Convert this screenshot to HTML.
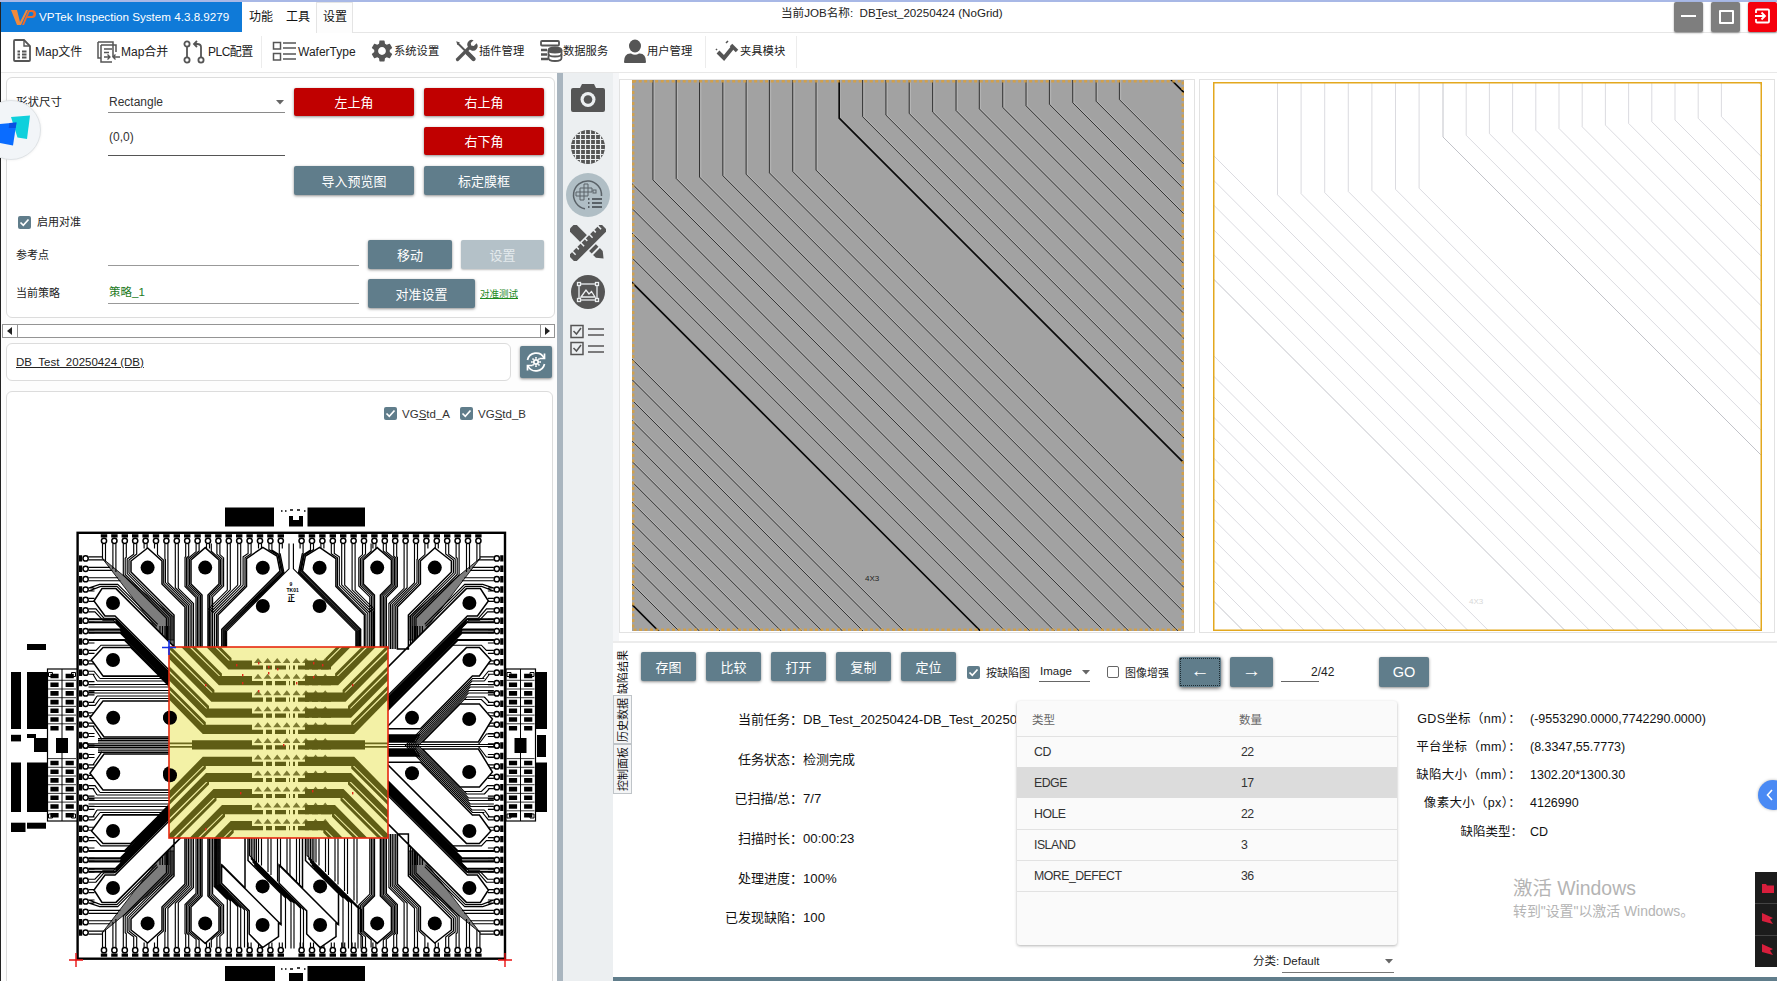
<!DOCTYPE html>
<html lang="zh-CN">
<head>
<meta charset="utf-8">
<title>VPTek Inspection System</title>
<style>
html,body{margin:0;padding:0;}
body{width:1777px;height:981px;overflow:hidden;background:#fff;position:relative;font-family:"Liberation Sans","Noto Sans CJK SC",sans-serif;font-size:12px;color:#222;}
.a{position:absolute;}
.t{position:absolute;white-space:nowrap;line-height:1;}
.btn{position:absolute;background:#607d8b;color:#fff;border-radius:2px;box-shadow:0 1px 3px rgba(0,0,0,.45);text-align:center;font-size:13px;box-sizing:border-box;}
.btn.red{background:#c00000;}
.btn span{position:absolute;left:0;right:0;top:50%;transform:translateY(-50%);line-height:1;}
.card{position:absolute;border:1px solid #dcdcdc;border-radius:6px;background:#fff;box-sizing:border-box;}
.ul{position:absolute;height:1px;background:#8a8a8a;}
.cb{position:absolute;width:13px;height:13px;background:#607d8b;border-radius:2px;}
.cb svg{position:absolute;left:0;top:0;}
.row{position:absolute;left:0;right:0;border-bottom:1px solid #e2e2e2;}
</style>
</head>
<body>
<!-- top strip -->
<div class="a" style="left:0;top:0;width:1777px;height:2px;background:#a8b8e6;"></div>
<div class="a" style="left:0;top:2px;width:1px;height:979px;background:#222;"></div>
<!-- title -->
<div class="a" style="left:1px;top:2px;width:241px;height:30px;background:#0f7ad8;"></div>
<svg class="a" style="left:9px;top:7px" width="28" height="20" viewBox="0 0 28 20">
<path d="M2 3 L8 3 L11 15 L17 3 L19 3 L12 18 L8 18 Z" fill="#f08a3c"/>
<path d="M13 18 L18.5 5 Q19 3 21 3 L23 3 Q27 3 27 7 Q27 11 23 11 L18 11 L19 9 L22.5 9 Q24.5 9 24.5 7 Q24.5 5 22.5 5 L20.5 5 L15 18 Z" fill="#ef6a2a"/>
</svg>
<div class="t" style="left:39px;top:11px;font-size:11.65px;color:#fff;">VPTek Inspection System 4.3.8.9279</div>
<div class="t" style="left:249px;top:11px;font-size:12px;color:#111;">功能</div>
<div class="t" style="left:286px;top:11px;font-size:12px;color:#111;">工具</div>
<div class="a" style="left:316px;top:2px;width:37px;height:31px;border:1px solid #e4e4e4;border-bottom:none;background:#fdfdfd;box-sizing:border-box;"></div>
<div class="t" style="left:323px;top:11px;font-size:12px;color:#111;">设置</div>
<div class="a" style="left:353px;top:32px;width:1424px;height:1px;background:#e6e6e6;"></div>
<div class="t" style="left:781px;top:7px;font-size:11.6px;color:#222;">当前JOB名称:&nbsp; DB<u>T</u>est_20250424 (NoGrid)</div>
<!-- window buttons -->
<div class="a" style="left:1674px;top:2px;width:29px;height:30px;background:#7e7e7e;border-radius:2px;box-shadow:0 1px 2px rgba(0,0,0,.4);"><div class="a" style="left:7px;top:13px;width:15px;height:2px;background:#fff;"></div></div>
<div class="a" style="left:1711px;top:2px;width:29px;height:30px;background:#7e7e7e;border-radius:2px;box-shadow:0 1px 2px rgba(0,0,0,.4);"><div class="a" style="left:8px;top:8px;width:11px;height:10px;border:2px solid #fff;border-radius:1px;"></div></div>
<div class="a" style="left:1748px;top:2px;width:29px;height:30px;background:#f5000c;border-radius:2px;box-shadow:0 1px 2px rgba(0,0,0,.4);">
<svg width="29" height="29" viewBox="0 0 29 29" fill="none" stroke="#fff" stroke-width="1.8"><path d="M8 11V8.5Q8 7.5 9 7.5H20Q21 7.5 21 8.5V19.500000000000004Q21 20.5 20 20.5H9Q8 20.5 8 19.5V17"/><path d="M7 14H17M13.5 10.5L17 14L13.5 17.5"/></svg></div>
<div class="a" style="left:1px;top:72px;width:1776px;height:1px;background:#e8e8e8;"></div>
<div class="a" style="left:261px;top:36px;width:1px;height:32px;background:#ececec;"></div>
<div class="a" style="left:705px;top:36px;width:1px;height:32px;background:#ececec;"></div>
<div class="a" style="left:796px;top:36px;width:1px;height:32px;background:#ececec;"></div>
<!-- Map file icon -->
<svg class="a" style="left:11px;top:38px" width="22" height="26" viewBox="0 0 22 26" fill="none" stroke="#555" stroke-width="1.8"><path d="M3 3Q3 2 4 2H13L19 8V22Q19 23 18 23H4Q3 23 3 22Z"/><path d="M13 2V8H19" stroke-width="1.4"/><path d="M6.5 13.5H9M11 13.5H15.500000000000002M6.5 16.5H9M11 16.5H15.5M6.5 19.5H9M11 19.5H15.5" stroke-width="2"/></svg>
<div class="t" style="left:35px;top:46px;">Map文件</div>
<!-- Map merge icon -->
<svg class="a" style="left:96px;top:39px" width="26" height="26" viewBox="0 0 26 26" fill="none" stroke="#555" stroke-width="1.5"><path d="M2 3H17V18M2 3V19H5"/><path d="M5 6H20V13M5 6V23H16"/><path d="M8 10H16M8 13.500000000000002H13M8 18H14M11.5 15.5L14 18L11.5 20.5M24 18H17M19.5 15.5L17 18L19.5 20.5" stroke-width="1.3"/></svg>
<div class="t" style="left:121px;top:46px;">Map合并</div>
<!-- PLC icon -->
<svg class="a" style="left:182px;top:39px" width="24" height="26" viewBox="0 0 24 26" fill="none" stroke="#555" stroke-width="1.8"><circle cx="5" cy="5" r="2.6"/><circle cx="5" cy="21" r="2.6"/><circle cx="19" cy="21" r="2.6"/><path d="M5 7.8V18.2M19 18.2V8Q19 5 15 5H12M15 2L12 5L15 8"/></svg>
<div class="t" style="left:208px;top:46px;letter-spacing:-.5px;">PLC配置</div>
<!-- WaferType icon -->
<svg class="a" style="left:272px;top:41px" width="26" height="22" viewBox="0 0 26 22" fill="none" stroke="#555" stroke-width="1.5"><rect x="1.5" y="1.5" width="7" height="6.5"/><rect x="1.5" y="12.5" width="7" height="6.5"/><path d="M11 2H24M11 7H24M11 13H24M11 18H24" stroke-width="1.3"/></svg>
<div class="t" style="left:298px;top:46px;">WaferType</div>
<!-- gear -->
<svg class="a" style="left:369px;top:38px" width="26" height="26" viewBox="0 0 24 24"><path fill="#555" d="M19.14 12.94c.04-.3.06-.61.06-.94 0-.32-.02-.64-.07-.94l2.030000000000001-1.58a.49.49 0 0 0 .12-.61l-1.92-3.32a.488.488 0 0 0-.59-.22l-2.39.96c-.5-.38-1.03-.7-1.62-.94l-.36-2.54a.484.484 0 0 0-.48-.41h-3.840000000000001c-.24 0-.43.17-.47.41l-.36 2.54c-.59.24-1.13.57-1.62.94l-2.39-.96c-.22-.08-.47 0-.59.22L2.74 8.870000000000001c-.12.21-.08.47.12.61l2.03 1.58c-.05.3-.09.63-.09.94s.02.64.07.94l-2.03 1.58a.49.49 0 0 0-.12.61l1.92 3.32c.12.22.37.29.59.22l2.39-.96c.5.38 1.030000000000001.7 1.62.94l.36 2.54c.05.24.24.41.48.41h3.84c.24 0 .44-.17.47-.41l.36-2.54c.59-.24 1.13-.56 1.620000000000001-.94l2.39.96c.22.08.47 0 .59-.22l1.92-3.320000000000001c.12-.22.07-.47-.12-.61l-2.01-1.58zM12 15.6c-1.98 0-3.600000000000001-1.62-3.6-3.6s1.62-3.6 3.600000000000001-3.6 3.6 1.62 3.6 3.6-1.62 3.6-3.6 3.6z"/></svg>
<div class="t" style="left:394px;top:46px;font-size:11.3px;">系统设置</div>
<!-- tools -->
<svg class="a" style="left:454px;top:39px" width="24" height="24" viewBox="0 0 24 24"><g fill="none" stroke="#555" stroke-linecap="round"><path d="M3.5 20.5L14.5 9.5" stroke-width="3.2"/><path d="M4 4.500000000000001L12 12.5" stroke-width="2"/><path d="M13.5 14L19.5 20" stroke-width="4.4"/></g><path d="M22.6 4.2L19.8 7L17.2 6.6L16.8 4L19.600000000000005 1.2A4.6 4.6 0 0 0 13.6 7.200000000000001L15 10L17 11.2A4.6 4.6 0 0 0 22.6 4.2Z" fill="#555"/><path d="M2.2 2.2L6 3.4L4.5 4.5L3.4 6Z" fill="#555"/></svg>
<div class="t" style="left:479px;top:46px;font-size:11.3px;">插件管理</div>
<!-- data -->
<svg class="a" style="left:539px;top:39px" width="26" height="24" viewBox="0 0 26 24" fill="none" stroke="#555" stroke-width="1.8"><rect x="2" y="2" width="18" height="4.5" rx="1"/><path d="M2 11H8M2 15.5H8M2 20H9" stroke-width="2.4"/><ellipse cx="16" cy="11" rx="6.5" ry="2.6" fill="#555"/><path d="M9.5 11V19Q9.5 22 16 22Q22.5 22 22.5 19V11" /><path d="M9.5 15Q9.5 17.5 16 17.5Q22.5 17.5 22.5 15"/></svg>
<div class="t" style="left:563px;top:46px;font-size:11.3px;">数据服务</div>
<!-- user -->
<svg class="a" style="left:623px;top:38px" width="24" height="26" viewBox="0 0 24 26"><ellipse cx="12" cy="8" rx="6" ry="6.5" fill="#555"/><path d="M1 24Q1 15 8 15.500000000000002Q12 18 16 15.5Q23 15 23 24Q23 25 22 25H2Q1 25 1 24Z" fill="#555"/></svg>
<div class="t" style="left:647px;top:46px;font-size:11.3px;">用户管理</div>
<!-- fixture -->
<svg class="a" style="left:714px;top:39px" width="26" height="24" viewBox="0 0 26 24" fill="none" stroke="#555"><path d="M4 13L10 19L19 8" stroke-width="4"/><path d="M17 6L23 12" stroke-width="3.5"/><path d="M12 4L14 2M3 10L2 11" stroke-width="1.6"/></svg>
<div class="t" style="left:740px;top:46px;font-size:11.3px;">夹具模块</div>

<!-- left panel bg -->
<div class="a" style="left:1px;top:73px;width:556px;height:908px;background:#fdfdfd;"></div>
<div class="card" style="left:6px;top:77px;width:549px;height:241px;"></div>
<div class="t" style="left:16px;top:97px;font-size:11.5px;">形状尺寸</div>
<div class="t" style="left:109px;top:96px;font-size:12px;color:#333;">Rectangle</div>
<svg class="a" style="left:276px;top:100px" width="8" height="5"><path d="M0 0H8L4 4.5Z" fill="#666"/></svg>
<div class="ul" style="left:108px;top:112px;width:177px;"></div>
<div class="t" style="left:109px;top:131px;font-size:12px;color:#333;">(0,0)</div>
<div class="ul" style="left:108px;top:155px;width:177px;background:#555;"></div>
<!-- floating circle -->
<div class="a" style="left:-19px;top:100px;width:60px;height:60px;border-radius:50%;background:#f2f5f8;border:1px solid #dfe3e6;box-sizing:border-box;box-shadow:0 0 3px rgba(0,0,0,.08);"></div>
<svg class="a" style="left:0;top:112px" width="34" height="36" viewBox="0 0 34 36"><path d="M11 5L30 3.5L27 27L17.500000000000004 25.5Z" fill="#0fd0dc"/><path d="M0 12L16.5 10.500000000000002L13 33.5L0 31Z" fill="#0a6cff"/><path d="M9.5 11.1L16.5 10.5L15.7 16L8.700000000000001 16Z" fill="#0a50e0"/></svg>
<div class="btn red" style="left:294px;top:88px;width:120px;height:28px;"><span>左上角</span></div>
<div class="btn red" style="left:424px;top:88px;width:120px;height:28px;"><span>右上角</span></div>
<div class="btn red" style="left:424px;top:127px;width:120px;height:28px;"><span>右下角</span></div>
<div class="btn" style="left:294px;top:166px;width:120px;height:29px;"><span>导入预览图</span></div>
<div class="btn" style="left:424px;top:166px;width:120px;height:29px;"><span>标定膜框</span></div>
<div class="cb" style="left:18px;top:216px;"><svg width="13" height="13" viewBox="0 0 13 13" fill="none" stroke="#fff" stroke-width="1.7"><path d="M2.5 6.5L5.3 9.3L10.5 3.5"/></svg></div>
<div class="t" style="left:37px;top:217px;font-size:11px;">启用对准</div>
<div class="t" style="left:16px;top:250px;font-size:11px;">参考点</div>
<div class="ul" style="left:108px;top:265px;width:251px;background:#999;"></div>
<div class="btn" style="left:368px;top:240px;width:84px;height:29px;"><span>移动</span></div>
<div class="btn" style="left:461px;top:240px;width:83px;height:29px;background:#b4c1c8;box-shadow:0 1px 2px rgba(0,0,0,.25);"><span style="color:#e4eaed">设置</span></div>
<div class="t" style="left:16px;top:288px;font-size:11px;">当前策略</div>
<div class="t" style="left:109px;top:287px;font-size:11.5px;color:#1c7a1c;">策略_1</div>
<div class="ul" style="left:108px;top:303px;width:251px;background:#999;"></div>
<div class="btn" style="left:368px;top:279px;width:107px;height:29px;"><span>对准设置</span></div>
<div class="t" style="left:480px;top:289px;font-size:9.500000000000002px;color:#1c8a1c;text-decoration:underline;">对准测试</div>
<!-- hscroll -->
<div class="a" style="left:2px;top:324px;width:553px;height:14px;background:#fff;border:1px solid #949494;box-sizing:border-box;"></div>
<div class="a" style="left:17px;top:324px;width:1px;height:14px;background:#949494;"></div>
<div class="a" style="left:540px;top:324px;width:1px;height:14px;background:#949494;"></div>
<svg class="a" style="left:7px;top:327px" width="6" height="8"><path d="M5 0V8L0 4Z" fill="#222"/></svg>
<svg class="a" style="left:545px;top:327px" width="6" height="8"><path d="M0 0V8L5 4Z" fill="#222"/></svg>
<!-- db card -->
<div class="card" style="left:6px;top:343px;width:505px;height:38px;"></div>
<div class="t" style="left:16px;top:357px;font-size:11.5px;text-decoration:underline;color:#222;">DB_Test_20250424 (DB)</div>
<div class="btn" style="left:520px;top:346px;width:32px;height:32px;">
<svg class="a" style="left:4px;top:4px" width="24" height="24" viewBox="0 0 24 24" fill="none" stroke="#fff" stroke-width="1.7"><path d="M3.5 10A8.8 8.8 0 0 1 20 8M20.5 14A8.8 8.8 0 0 1 4 16"/><path d="M20.5 3.5V8.5H15.5M3.5 20.5V15.500000000000002H8.5"/><circle cx="12" cy="12" r="2.2"/><path d="M12 7V8.8M12 15.2V17M7 12H8.8M15.2 12H17M8.5 8.5L9.7 9.7M14.3 14.3L15.5 15.5M8.5 15.5L9.700000000000001 14.3M14.3 9.7L15.5 8.5" stroke-width="1.6"/></svg></div>
<!-- map card -->
<div class="card" style="left:6px;top:391px;width:547px;height:600px;"></div>
<!--CHIP0--><svg class="a" style="left:7px;top:392px" width="546" height="589" viewBox="7 392 546 589"><path d="M102.0 558.0L178.0 620.5L178.0 640.0L158.0 640.0L156.0 628.0ZM102.0 933.0L178.0 870.5L178.0 851.0L158.0 851.0L156.0 863.0ZM480.4 558.0L404.4 620.5L404.4 640.0L424.4 640.0L426.4 628.0ZM480.4 933.0L404.4 870.5L404.4 851.0L424.4 851.0L426.4 863.0Z" fill="#7d7d7d" stroke="#222" stroke-width="1"/>
<g fill="none" stroke="#000">
<path d="M102.5 543.5L102.5 548.5M105.5 543.5L105.5 548.5M112.9 543.5L112.9 548.5M115.9 543.5L115.9 548.5M123.3 543.5L123.3 548.5M126.3 543.5L126.3 548.5M133.7 543.5L133.7 548.5M136.7 543.5L136.7 548.5M144.1 543.5L144.1 548.5M147.1 543.5L147.1 548.5M154.5 543.5L154.5 548.5M157.5 543.5L157.5 548.5M164.9 543.5L164.9 548.5M167.9 543.5L167.9 548.5M175.3 543.5L175.3 548.5M178.3 543.5L178.3 548.5M185.7 543.5L185.7 548.5M188.7 543.5L188.7 548.5M196.1 543.5L196.1 548.5M199.1 543.5L199.1 548.5M206.5 543.5L206.5 548.5M209.5 543.5L209.5 548.5M216.9 543.5L216.9 548.5M219.9 543.5L219.9 548.5M227.3 543.5L227.3 548.5M230.3 543.5L230.3 548.5M237.7 543.5L237.7 548.5M240.7 543.5L240.7 548.5M248.1 543.5L248.1 548.5M251.1 543.5L251.1 548.5M258.5 543.5L258.5 548.5M261.5 543.5L261.5 548.5M268.9 543.5L268.9 548.5M271.9 543.5L271.9 548.5M279.3 543.5L279.3 548.5M282.3 543.5L282.3 548.5M136.7 543.5L136.7 554.0L129.0 560.0L129.0 572.8L172.0 615.8L172.0 649.0M133.7 543.5L133.7 554.1L127.2 559.1L127.2 573.6L170.2 616.6L170.2 649.0M126.3 543.5L126.3 557.3L125.2 558.2L125.2 574.4L168.2 617.4L168.2 649.0M123.3 543.5L123.3 575.0L166.4 618.1L166.4 649.0M102.5 543.5L102.5 558.5M105.5 543.5L105.5 561.5M112.9 543.5L112.9 568.9M115.9 543.5L115.9 571.9M160.0 626.0L160.0 657.0M162.5 626.0L162.5 657.0M165.0 626.0L165.0 657.0M167.5 626.0L167.5 657.0M170.0 626.0L170.0 657.0M172.0 626.0L172.0 657.0M157.5 543.5L157.5 554.6L163.7 560.2L163.7 583.3L186.7 606.3L186.7 649.0M164.9 543.5L164.9 559.0L165.4 559.5L165.4 582.6L188.4 605.6L188.4 649.0M167.9 543.5L167.9 582.7L190.1 604.9L190.1 649.0M175.3 543.5L175.3 587.7L191.8 604.2L191.8 649.0M178.3 543.5L178.3 588.3L193.5 603.5L193.5 649.0M199.1 543.5L199.1 550.9L189.5 559.3L189.5 584.6L200.5 595.6L200.5 649.0M196.1 543.5L196.1 551.6L188.0 558.6L188.0 585.2L199.0 596.2L199.0 649.0M188.7 543.5L188.7 556.0L186.5 558.0L186.5 585.9L197.5 596.9L197.5 649.0M185.7 543.5L185.7 556.7L185.0 557.3L185.0 586.5L196.0 597.5L196.0 649.0M211.3 543.5L211.3 551.2L220.4 559.4L220.4 584.6L209.4 595.6L209.4 649.0M216.9 543.5L216.9 554.1L222.0 558.7L222.0 585.2L211.0 596.2L211.0 649.0M219.9 543.5L219.9 554.6L223.6 557.9L223.6 585.9L212.6 596.9L212.6 649.0M251.1 543.5L251.1 553.7L245.0 557.9L245.0 585.9L216.5 614.4L216.5 649.0M248.1 543.5L248.1 553.4L243.1 556.9L243.1 585.1L214.6 613.6L214.6 649.0M240.7 543.5L240.7 584.8L212.7 612.8L212.7 649.0M237.7 543.5L237.7 585.1L210.8 612.0L210.8 649.0M230.3 543.5L230.3 589.8L208.9 611.2L208.9 649.0M227.3 543.5L227.3 590.1L207.0 610.4L207.0 649.0M268.9 543.5L268.9 549.6L278.1 555.3L281.3 571.4L223.0 629.7L223.0 649.0M271.9 543.5L271.9 550.1L279.1 554.5L282.6 571.8L224.2 630.2L224.2 649.0M279.3 543.5L279.3 553.2L280.2 553.8L283.9 572.2L225.4 630.7L225.4 649.0M289.0 543.5L289.0 568.8L226.6 631.2L226.6 649.0M88.5 556.9L101.9 556.9M88.5 559.9L104.2 559.9M88.5 567.3L110.0 567.3M88.5 570.3L112.3 570.3M88.5 577.7L118.0 577.7M88.5 580.7L120.4 580.7M88.5 591.1L100.8 586.4L116.9 586.4L156.9 626.4M88.5 588.1L99.7 584.4L117.7 584.4L157.7 624.4M88.5 608.8L95.9 608.8L103.9 618.2L114.1 618.2L144.1 648.2M88.5 611.8L94.9 611.8L102.9 620.2L113.3 620.2L143.3 650.2M100.0 678.5L216.0 678.5M97.0 681.0L216.0 681.0M88.5 684.5L216.0 684.5M88.5 687.0L216.0 687.0M88.5 690.5L216.0 690.5M88.5 693.0L216.0 693.0M97.0 696.0L216.0 696.0M100.0 698.5L216.0 698.5M88.5 671.2L94.0 671.2L100.0 678.5M88.5 674.2L93.0 674.2L97.0 681.0M88.5 705.4L95.0 705.4L100.0 698.5M88.5 702.4L93.0 702.4L97.0 696.0M98.0 738.6L216.0 738.6M98.0 740.3L216.0 740.3M98.0 742.0L216.0 742.0M88.5 743.7L216.0 743.7M88.5 745.4L216.0 745.4M88.5 726.2L93.0 726.2L102.0 739.4M88.5 723.2L94.0 723.2M88.5 556.9L94.5 556.9M88.5 559.9L94.5 559.9M88.5 567.3L94.5 567.3M88.5 570.3L94.5 570.3M88.5 577.7L94.5 577.7M88.5 580.7L94.5 580.7M88.5 588.0L94.5 588.0M88.5 591.0L94.5 591.0M88.5 598.4L94.5 598.4M88.5 601.4L94.5 601.4M88.5 608.8L94.5 608.8M88.5 611.8L94.5 611.8M88.5 619.2L94.5 619.2M88.5 622.2L94.5 622.2M88.5 629.6L94.5 629.6M88.5 632.6L94.5 632.6M88.5 640.0L94.5 640.0M88.5 643.0L94.5 643.0M88.5 650.4L94.5 650.4M88.5 653.4L94.5 653.4M88.5 660.8L94.5 660.8M88.5 663.8L94.5 663.8M88.5 671.2L94.5 671.2M88.5 674.2L94.5 674.2M88.5 681.6L94.5 681.6M88.5 684.6L94.5 684.6M88.5 691.9L94.5 691.9M88.5 694.9L94.5 694.9M88.5 702.3L94.5 702.3M88.5 705.3L94.5 705.3M88.5 712.7L94.5 712.7M88.5 715.7L94.5 715.7M88.5 723.1L94.5 723.1M88.5 726.1L94.5 726.1M88.5 733.5L94.5 733.5M88.5 736.5L94.5 736.5M88.5 743.9L94.5 743.9M88.5 650.4L96.0 650.4L101.0 645.2L131.0 645.2M88.5 653.4L94.0 653.4M88.5 660.8L90.0 660.8M88.5 663.8L92.0 663.8M88.5 712.8L91.0 712.8M88.5 715.8L90.0 715.8M88.5 598.4L94.0 598.4M88.5 601.4L93.0 601.4M102.5 947.5L102.5 942.5M105.5 947.5L105.5 942.5M112.9 947.5L112.9 942.5M115.9 947.5L115.9 942.5M123.3 947.5L123.3 942.5M126.3 947.5L126.3 942.5M133.7 947.5L133.7 942.5M136.7 947.5L136.7 942.5M144.1 947.5L144.1 942.5M147.1 947.5L147.1 942.5M154.5 947.5L154.5 942.5M157.5 947.5L157.5 942.5M164.9 947.5L164.9 942.5M167.9 947.5L167.9 942.5M175.3 947.5L175.3 942.5M178.3 947.5L178.3 942.5M185.7 947.5L185.7 942.5M188.7 947.5L188.7 942.5M196.1 947.5L196.1 942.5M199.1 947.5L199.1 942.5M206.5 947.5L206.5 942.5M209.5 947.5L209.5 942.5M216.9 947.5L216.9 942.5M219.9 947.5L219.9 942.5M227.3 947.5L227.3 942.5M230.3 947.5L230.3 942.5M237.7 947.5L237.7 942.5M240.7 947.5L240.7 942.5M248.1 947.5L248.1 942.5M251.1 947.5L251.1 942.5M258.5 947.5L258.5 942.5M261.5 947.5L261.5 942.5M268.9 947.5L268.9 942.5M271.9 947.5L271.9 942.5M279.3 947.5L279.3 942.5M282.3 947.5L282.3 942.5M136.7 947.5L136.7 937.0L129.0 931.0L129.0 918.2L172.0 875.2L172.0 834.0M133.7 947.5L133.7 936.9L127.2 931.9L127.2 917.4L170.2 874.4L170.2 834.0M126.3 947.5L126.3 933.7L125.2 932.8L125.2 916.6L168.2 873.6L168.2 834.0M123.3 947.5L123.3 916.0L166.4 872.9L166.4 834.0M102.5 947.5L102.5 932.5M105.5 947.5L105.5 929.5M112.9 947.5L112.9 922.1M115.9 947.5L115.9 919.1M160.0 865.0L160.0 834.0M162.5 865.0L162.5 834.0M165.0 865.0L165.0 834.0M167.5 865.0L167.5 834.0M170.0 865.0L170.0 834.0M172.0 865.0L172.0 834.0M157.5 947.5L157.5 936.4L163.7 930.8L163.7 907.7L186.7 884.7L186.7 834.0M164.9 947.5L164.9 932.0L165.4 931.5L165.4 908.4L188.4 885.4L188.4 834.0M167.9 947.5L167.9 908.3L190.1 886.1L190.1 834.0M175.3 947.5L175.3 903.3L191.8 886.8L191.8 834.0M178.3 947.5L178.3 902.7L193.5 887.5L193.5 834.0M199.1 947.5L199.1 940.1L189.5 931.7L189.5 906.4L200.5 895.4L200.5 834.0M196.1 947.5L196.1 939.4L188.0 932.4L188.0 905.8L199.0 894.8L199.0 834.0M188.7 947.5L188.7 935.0L186.5 933.0L186.5 905.1L197.5 894.1L197.5 834.0M185.7 947.5L185.7 934.3L185.0 933.7L185.0 904.5L196.0 893.5L196.0 834.0M211.3 947.5L211.3 939.8L220.4 931.6L220.4 906.4L209.4 895.4L209.4 834.0M216.9 947.5L216.9 936.9L222.0 932.3L222.0 905.8L211.0 894.8L211.0 834.0M219.9 947.5L219.9 936.4L223.6 933.1L223.6 905.1L212.6 894.1L212.6 834.0M247.5 947.5L247.5 911.2L220.2 883.9L220.2 834.0M244.5 947.5L244.5 909.9L219.0 884.4L219.0 834.0M240.7 947.5L240.7 907.8L217.8 884.9L217.8 834.0M237.7 947.5L237.7 906.5L216.6 885.4L216.6 834.0M230.3 947.5L230.3 900.8L215.4 885.9L215.4 834.0M227.3 947.5L227.3 899.5L214.2 886.4L214.2 834.0M88.5 934.1L101.9 934.1M88.5 931.1L104.2 931.1M88.5 923.7L110.0 923.7M88.5 920.7L112.3 920.7M88.5 913.3L118.0 913.3M88.5 910.3L120.4 910.3M88.5 899.9L100.8 904.6L116.9 904.6L156.9 864.6M88.5 902.9L99.7 906.6L117.7 906.6L157.7 866.6M88.5 882.2L95.9 882.2L103.9 872.8L114.1 872.8L144.1 842.8M88.5 879.2L94.9 879.2L102.9 870.8L113.3 870.8L143.3 840.8M100.0 812.5L216.0 812.5M97.0 810.0L216.0 810.0M88.5 806.5L216.0 806.5M88.5 804.0L216.0 804.0M88.5 800.5L216.0 800.5M88.5 798.0L216.0 798.0M97.0 795.0L216.0 795.0M100.0 792.5L216.0 792.5M88.5 819.8L94.0 819.8L100.0 812.5M88.5 816.8L93.0 816.8L97.0 810.0M88.5 785.6L95.0 785.6L100.0 792.5M88.5 788.6L93.0 788.6L97.0 795.0M98.0 752.4L216.0 752.4M98.0 750.7L216.0 750.7M98.0 749.0L216.0 749.0M88.5 747.3L216.0 747.3M88.5 745.6L216.0 745.6M88.5 764.8L93.0 764.8L102.0 751.6M88.5 767.8L94.0 767.8M88.5 934.1L94.5 934.1M88.5 931.1L94.5 931.1M88.5 923.7L94.5 923.7M88.5 920.7L94.5 920.7M88.5 913.3L94.5 913.3M88.5 910.3L94.5 910.3M88.5 903.0L94.5 903.0M88.5 900.0L94.5 900.0M88.5 892.6L94.5 892.6M88.5 889.6L94.5 889.6M88.5 882.2L94.5 882.2M88.5 879.2L94.5 879.2M88.5 871.8L94.5 871.8M88.5 868.8L94.5 868.8M88.5 861.4L94.5 861.4M88.5 858.4L94.5 858.4M88.5 851.0L94.5 851.0M88.5 848.0L94.5 848.0M88.5 840.6L94.5 840.6M88.5 837.6L94.5 837.6M88.5 830.2L94.5 830.2M88.5 827.2L94.5 827.2M88.5 819.8L94.5 819.8M88.5 816.8L94.5 816.8M88.5 809.4L94.5 809.4M88.5 806.4L94.5 806.4M88.5 799.1L94.5 799.1M88.5 796.1L94.5 796.1M88.5 788.7L94.5 788.7M88.5 785.7L94.5 785.7M88.5 778.3L94.5 778.3M88.5 775.3L94.5 775.3M88.5 767.9L94.5 767.9M88.5 764.9L94.5 764.9M88.5 757.5L94.5 757.5M88.5 754.5L94.5 754.5M88.5 747.1L94.5 747.1M88.5 840.6L96.0 840.6L101.0 845.8L131.0 845.8M88.5 837.6L94.0 837.6M88.5 830.2L90.0 830.2M88.5 827.2L92.0 827.2M88.5 778.2L91.0 778.2M88.5 775.2L90.0 775.2M88.5 892.6L94.0 892.6M88.5 889.6L93.0 889.6M479.9 543.5L479.9 548.5M476.9 543.5L476.9 548.5M469.5 543.5L469.5 548.5M466.5 543.5L466.5 548.5M459.1 543.5L459.1 548.5M456.1 543.5L456.1 548.5M448.7 543.5L448.7 548.5M445.7 543.5L445.7 548.5M438.3 543.5L438.3 548.5M435.3 543.5L435.3 548.5M427.9 543.5L427.9 548.5M424.9 543.5L424.9 548.5M417.5 543.5L417.5 548.5M414.5 543.5L414.5 548.5M407.1 543.5L407.1 548.5M404.1 543.5L404.1 548.5M396.7 543.5L396.7 548.5M393.7 543.5L393.7 548.5M386.3 543.5L386.3 548.5M383.3 543.5L383.3 548.5M375.9 543.5L375.9 548.5M372.9 543.5L372.9 548.5M365.5 543.5L365.5 548.5M362.5 543.5L362.5 548.5M355.1 543.5L355.1 548.5M352.1 543.5L352.1 548.5M344.7 543.5L344.7 548.5M341.7 543.5L341.7 548.5M334.3 543.5L334.3 548.5M331.3 543.5L331.3 548.5M323.9 543.5L323.9 548.5M320.9 543.5L320.9 548.5M313.5 543.5L313.5 548.5M310.5 543.5L310.5 548.5M303.1 543.5L303.1 548.5M300.1 543.5L300.1 548.5M445.7 543.5L445.7 554.0L453.4 560.0L453.4 572.8L410.4 615.8L410.4 649.0M448.7 543.5L448.7 554.1L455.2 559.1L455.2 573.6L412.2 616.6L412.2 649.0M456.1 543.5L456.1 557.3L457.2 558.2L457.2 574.4L414.2 617.4L414.2 649.0M459.1 543.5L459.1 575.0L416.0 618.1L416.0 649.0M479.9 543.5L479.9 558.5M476.9 543.5L476.9 561.5M469.5 543.5L469.5 568.9M466.5 543.5L466.5 571.9M422.4 626.0L422.4 657.0M419.9 626.0L419.9 657.0M417.4 626.0L417.4 657.0M414.9 626.0L414.9 657.0M412.4 626.0L412.4 657.0M410.4 626.0L410.4 657.0M424.9 543.5L424.9 554.6L418.7 560.2L418.7 583.3L395.7 606.3L395.7 649.0M417.5 543.5L417.5 559.0L417.0 559.5L417.0 582.6L394.0 605.6L394.0 649.0M414.5 543.5L414.5 582.7L392.3 604.9L392.3 649.0M407.1 543.5L407.1 587.7L390.6 604.2L390.6 649.0M404.1 543.5L404.1 588.3L388.9 603.5L388.9 649.0M383.3 543.5L383.3 550.9L392.9 559.3L392.9 584.6L381.9 595.6L381.9 649.0M386.3 543.5L386.3 551.6L394.4 558.6L394.4 585.2L383.4 596.2L383.4 649.0M393.7 543.5L393.7 556.0L395.9 558.0L395.9 585.9L384.9 596.9L384.9 649.0M396.7 543.5L396.7 556.7L397.4 557.3L397.4 586.5L386.4 597.5L386.4 649.0M371.1 543.5L371.1 551.2L362.0 559.4L362.0 584.6L373.0 595.6L373.0 649.0M365.5 543.5L365.5 554.1L360.4 558.7L360.4 585.2L371.4 596.2L371.4 649.0M362.5 543.5L362.5 554.6L358.8 557.9L358.8 585.9L369.8 596.9L369.8 649.0M331.3 543.5L331.3 553.7L337.4 557.9L337.4 585.9L365.9 614.4L365.9 649.0M334.3 543.5L334.3 553.4L339.3 556.9L339.3 585.1L367.8 613.6L367.8 649.0M341.7 543.5L341.7 584.8L369.7 612.8L369.7 649.0M344.7 543.5L344.7 585.1L371.6 612.0L371.6 649.0M352.1 543.5L352.1 589.8L373.5 611.2L373.5 649.0M355.1 543.5L355.1 590.1L375.4 610.4L375.4 649.0M313.5 543.5L313.5 549.6L304.3 555.3L301.1 571.4L359.4 629.7L359.4 649.0M310.5 543.5L310.5 550.1L303.3 554.5L299.8 571.8L358.2 630.2L358.2 649.0M303.1 543.5L303.1 553.2L302.2 553.8L298.5 572.2L357.0 630.7L357.0 649.0M293.4 543.5L293.4 568.8L355.8 631.2L355.8 649.0M493.9 556.9L480.5 556.9M493.9 559.9L478.2 559.9M493.9 567.3L472.4 567.3M493.9 570.3L470.1 570.3M493.9 577.7L464.4 577.7M493.9 580.7L462.0 580.7M493.9 591.1L481.6 586.4L465.5 586.4L425.5 626.4M493.9 588.1L482.7 584.4L464.7 584.4L424.7 624.4M493.9 608.8L486.5 608.8L478.5 618.2L468.3 618.2L438.3 648.2M493.9 611.8L487.5 611.8L479.5 620.2L469.1 620.2L439.1 650.2M484.4 678.5L472.4 678.5L405.1 745.8M484.4 681.0L472.0 681.0L407.2 745.8M493.9 684.5L470.6 684.5L409.3 745.8M493.9 687.0L470.2 687.0L411.4 745.8M493.9 690.5L468.8 690.5L413.5 745.8M493.9 693.0L468.4 693.0L415.6 745.8M484.4 697.0L466.6 697.0L417.8 745.8M493.9 671.2L488.4 671.2L482.4 678.5M493.9 674.2L489.4 674.2L484.4 681.0M493.9 705.4L487.4 705.4L481.4 699.5L464.4 699.5M493.9 702.4L489.4 702.4L484.4 697.0M493.9 744.5L366.4 744.5M493.9 734.0L486.4 734.0L478.4 744.5M493.9 556.9L487.9 556.9M493.9 559.9L487.9 559.9M493.9 567.3L487.9 567.3M493.9 570.3L487.9 570.3M493.9 577.7L487.9 577.7M493.9 580.7L487.9 580.7M493.9 588.0L487.9 588.0M493.9 591.0L487.9 591.0M493.9 598.4L487.9 598.4M493.9 601.4L487.9 601.4M493.9 608.8L487.9 608.8M493.9 611.8L487.9 611.8M493.9 619.2L487.9 619.2M493.9 622.2L487.9 622.2M493.9 629.6L487.9 629.6M493.9 632.6L487.9 632.6M493.9 640.0L487.9 640.0M493.9 643.0L487.9 643.0M493.9 650.4L487.9 650.4M493.9 653.4L487.9 653.4M493.9 660.8L487.9 660.8M493.9 663.8L487.9 663.8M493.9 671.2L487.9 671.2M493.9 674.2L487.9 674.2M493.9 681.6L487.9 681.6M493.9 684.6L487.9 684.6M493.9 691.9L487.9 691.9M493.9 694.9L487.9 694.9M493.9 702.3L487.9 702.3M493.9 705.3L487.9 705.3M493.9 712.7L487.9 712.7M493.9 715.7L487.9 715.7M493.9 723.1L487.9 723.1M493.9 726.1L487.9 726.1M493.9 733.5L487.9 733.5M493.9 736.5L487.9 736.5M493.9 743.9L487.9 743.9M493.9 650.4L486.4 650.4L481.4 645.2L451.4 645.2M493.9 653.4L488.4 653.4M493.9 660.8L492.4 660.8M493.9 663.8L490.4 663.8M493.9 712.8L491.4 712.8M493.9 715.8L492.4 715.8M493.9 598.4L488.4 598.4M493.9 601.4L489.4 601.4M479.9 947.5L479.9 942.5M476.9 947.5L476.9 942.5M469.5 947.5L469.5 942.5M466.5 947.5L466.5 942.5M459.1 947.5L459.1 942.5M456.1 947.5L456.1 942.5M448.7 947.5L448.7 942.5M445.7 947.5L445.7 942.5M438.3 947.5L438.3 942.5M435.3 947.5L435.3 942.5M427.9 947.5L427.9 942.5M424.9 947.5L424.9 942.5M417.5 947.5L417.5 942.5M414.5 947.5L414.5 942.5M407.1 947.5L407.1 942.5M404.1 947.5L404.1 942.5M396.7 947.5L396.7 942.5M393.7 947.5L393.7 942.5M386.3 947.5L386.3 942.5M383.3 947.5L383.3 942.5M375.9 947.5L375.9 942.5M372.9 947.5L372.9 942.5M365.5 947.5L365.5 942.5M362.5 947.5L362.5 942.5M355.1 947.5L355.1 942.5M352.1 947.5L352.1 942.5M344.7 947.5L344.7 942.5M341.7 947.5L341.7 942.5M334.3 947.5L334.3 942.5M331.3 947.5L331.3 942.5M323.9 947.5L323.9 942.5M320.9 947.5L320.9 942.5M313.5 947.5L313.5 942.5M310.5 947.5L310.5 942.5M303.1 947.5L303.1 942.5M300.1 947.5L300.1 942.5M445.7 947.5L445.7 937.0L453.4 931.0L453.4 918.2L410.4 875.2L410.4 834.0M448.7 947.5L448.7 936.9L455.2 931.9L455.2 917.4L412.2 874.4L412.2 834.0M456.1 947.5L456.1 933.7L457.2 932.8L457.2 916.6L414.2 873.6L414.2 834.0M459.1 947.5L459.1 916.0L416.0 872.9L416.0 834.0M479.9 947.5L479.9 932.5M476.9 947.5L476.9 929.5M469.5 947.5L469.5 922.1M466.5 947.5L466.5 919.1M422.4 865.0L422.4 834.0M419.9 865.0L419.9 834.0M417.4 865.0L417.4 834.0M414.9 865.0L414.9 834.0M412.4 865.0L412.4 834.0M410.4 865.0L410.4 834.0M424.9 947.5L424.9 936.4L418.7 930.8L418.7 907.7L395.7 884.7L395.7 834.0M417.5 947.5L417.5 932.0L417.0 931.5L417.0 908.4L394.0 885.4L394.0 834.0M414.5 947.5L414.5 908.3L392.3 886.1L392.3 834.0M407.1 947.5L407.1 903.3L390.6 886.8L390.6 834.0M404.1 947.5L404.1 902.7L388.9 887.5L388.9 834.0M383.3 947.5L383.3 940.1L392.9 931.7L392.9 906.4L381.9 895.4L381.9 834.0M386.3 947.5L386.3 939.4L394.4 932.4L394.4 905.8L383.4 894.8L383.4 834.0M393.7 947.5L393.7 935.0L395.9 933.0L395.9 905.1L384.9 894.1L384.9 834.0M396.7 947.5L396.7 934.3L397.4 933.7L397.4 904.5L386.4 893.5L386.4 834.0M371.1 947.5L371.1 939.8L362.0 931.6L362.0 906.4L373.0 895.4L373.0 834.0M365.5 947.5L365.5 936.9L360.4 932.3L360.4 905.8L371.4 894.8L371.4 834.0M362.5 947.5L362.5 936.4L358.8 933.1L358.8 905.1L369.8 894.1L369.8 834.0M493.9 934.1L480.5 934.1M493.9 931.1L478.2 931.1M493.9 923.7L472.4 923.7M493.9 920.7L470.1 920.7M493.9 913.3L464.4 913.3M493.9 910.3L462.0 910.3M493.9 899.9L481.6 904.6L465.5 904.6L425.5 864.6M493.9 902.9L482.7 906.6L464.7 906.6L424.7 866.6M493.9 882.2L486.5 882.2L478.5 872.8L468.3 872.8L438.3 842.8M493.9 879.2L487.5 879.2L479.5 870.8L469.1 870.8L439.1 840.8M484.4 812.5L472.4 812.5L405.1 745.2M484.4 810.0L472.0 810.0L407.2 745.2M493.9 806.5L470.6 806.5L409.3 745.2M493.9 804.0L470.2 804.0L411.4 745.2M493.9 800.5L468.8 800.5L413.5 745.2M493.9 798.0L468.4 798.0L415.6 745.2M484.4 794.0L466.6 794.0L417.8 745.2M493.9 819.8L488.4 819.8L482.4 812.5M493.9 816.8L489.4 816.8L484.4 810.0M493.9 785.6L487.4 785.6L481.4 791.5L464.4 791.5M493.9 788.6L489.4 788.6L484.4 794.0M493.9 746.5L366.4 746.5M493.9 757.0L486.4 757.0L478.4 746.5M493.9 934.1L487.9 934.1M493.9 931.1L487.9 931.1M493.9 923.7L487.9 923.7M493.9 920.7L487.9 920.7M493.9 913.3L487.9 913.3M493.9 910.3L487.9 910.3M493.9 903.0L487.9 903.0M493.9 900.0L487.9 900.0M493.9 892.6L487.9 892.6M493.9 889.6L487.9 889.6M493.9 882.2L487.9 882.2M493.9 879.2L487.9 879.2M493.9 871.8L487.9 871.8M493.9 868.8L487.9 868.8M493.9 861.4L487.9 861.4M493.9 858.4L487.9 858.4M493.9 851.0L487.9 851.0M493.9 848.0L487.9 848.0M493.9 840.6L487.9 840.6M493.9 837.6L487.9 837.6M493.9 830.2L487.9 830.2M493.9 827.2L487.9 827.2M493.9 819.8L487.9 819.8M493.9 816.8L487.9 816.8M493.9 809.4L487.9 809.4M493.9 806.4L487.9 806.4M493.9 799.1L487.9 799.1M493.9 796.1L487.9 796.1M493.9 788.7L487.9 788.7M493.9 785.7L487.9 785.7M493.9 778.3L487.9 778.3M493.9 775.3L487.9 775.3M493.9 767.9L487.9 767.9M493.9 764.9L487.9 764.9M493.9 757.5L487.9 757.5M493.9 754.5L487.9 754.5M493.9 747.1L487.9 747.1M493.9 840.6L486.4 840.6L481.4 845.8L451.4 845.8M493.9 837.6L488.4 837.6M493.9 830.2L492.4 830.2M493.9 827.2L490.4 827.2M493.9 778.2L491.4 778.2M493.9 775.2L492.4 775.2M493.9 892.6L488.4 892.6M493.9 889.6L489.4 889.6M303.5 948.5L303.5 909.5L249.6 855.6L249.6 836.0M300.5 948.5L300.5 908.1L251.3 858.9L251.3 836.0M294.0 948.5L294.0 903.2L253.0 862.2L253.0 836.0M291.0 948.5L291.0 901.8L254.7 865.5L254.7 836.0M285.5 948.5L285.5 897.9L256.4 868.8L256.4 836.0M258.5 836.0L258.5 862.5M261.5 836.0L261.5 865.5M268.0 836.0L268.0 872.0M271.0 836.0L271.0 875.0M277.5 836.0L277.5 881.5M280.5 836.0L280.5 884.5M287.0 836.0L287.0 891.0M290.0 836.0L290.0 894.0M296.5 836.0L296.5 900.5M299.5 836.0L299.5 903.5M361.0 948.5L361.0 909.5L307.1 855.6L307.1 836.0M358.0 948.5L358.0 908.1L308.8 858.9L308.8 836.0M351.5 948.5L351.5 903.2L310.5 862.2L310.5 836.0M348.5 948.5L348.5 901.8L312.2 865.5L312.2 836.0M343.0 948.5L343.0 897.9L313.9 868.8L313.9 836.0M316.0 836.0L316.0 862.5M319.0 836.0L319.0 865.5M325.5 836.0L325.5 872.0M328.5 836.0L328.5 875.0M335.0 836.0L335.0 881.5M338.0 836.0L338.0 884.5M344.5 836.0L344.5 891.0M347.5 836.0L347.5 894.0M354.0 836.0L354.0 900.5M357.0 836.0L357.0 903.5" stroke-width="1.15"/>
<path d="M88.5 619.2L115.6 619.2L216.0 719.6M88.5 622.2L115.7 622.2L216.0 722.5M88.5 629.6L120.2 629.6L216.0 725.4M88.5 632.6L120.3 632.6L216.0 728.3M88.5 640.0L124.8 640.0L216.0 731.2M131.0 647.6L216.0 732.6M103.0 676.0L159.4 676.0M88.5 871.8L115.6 871.8L216.0 771.4M88.5 868.8L115.7 868.8L216.0 768.5M88.5 861.4L120.2 861.4L216.0 765.6M88.5 858.4L120.3 858.4L216.0 762.7M88.5 851.0L124.8 851.0L216.0 759.8M131.0 843.4L216.0 758.4M103.0 815.0L159.4 815.0M493.9 619.2L466.8 619.2L366.4 719.6M493.9 622.2L466.7 622.2L366.4 722.5M493.9 629.6L462.2 629.6L366.4 725.4M493.9 632.6L462.1 632.6L366.4 728.3M493.9 640.0L457.6 640.0L366.4 731.2M493.9 871.8L466.8 871.8L366.4 771.4M493.9 868.8L466.7 868.8L366.4 768.5M493.9 861.4L462.2 861.4L366.4 765.6M493.9 858.4L462.1 858.4L366.4 762.7M493.9 851.0L457.6 851.0L366.4 759.8M221.6 865.1L281.0 924.5M279.1 865.1L338.5 924.5" stroke-width="2.1"/>
<path d="M147.6 548.0L131.0 561.0L131.0 572.0L174.0 615.0L174.0 649.0L185.0 649.0L185.0 607.0L162.0 584.0L162.0 561.0ZM205.2 547.6L191.0 560.0L191.0 584.0L202.0 595.0L202.0 649.0L208.0 649.0L208.0 595.0L219.0 584.0L219.0 560.0ZM262.8 547.3L246.5 558.7L246.5 586.5L218.0 615.0L218.0 649.0L221.8 649.0L221.8 629.2L280.0 571.0L277.0 556.0ZM94.0 601.0L102.0 588.6L116.0 588.6L216.0 688.6L216.0 717.0L115.0 616.0L105.0 616.0ZM91.5 660.0L103.0 647.6L131.0 647.6L159.4 676.0L103.0 676.0ZM90.0 717.7L103.0 701.0L216.0 701.0L216.0 737.0L104.0 737.0ZM147.6 943.0L131.0 930.0L131.0 919.0L174.0 876.0L174.0 834.0L185.0 834.0L185.0 884.0L162.0 907.0L162.0 930.0ZM205.2 943.4L191.0 931.0L191.0 907.0L202.0 896.0L202.0 834.0L208.0 834.0L208.0 896.0L219.0 907.0L219.0 931.0ZM94.0 890.0L102.0 902.4L116.0 902.4L216.0 802.4L216.0 774.0L115.0 875.0L105.0 875.0ZM91.5 831.0L103.0 843.4L131.0 843.4L159.4 815.0L103.0 815.0ZM90.0 773.3L103.0 790.0L216.0 790.0L216.0 754.0L104.0 754.0ZM434.8 548.0L451.4 561.0L451.4 572.0L408.4 615.0L408.4 649.0L397.4 649.0L397.4 607.0L420.4 584.0L420.4 561.0ZM377.2 547.6L391.4 560.0L391.4 584.0L380.4 595.0L380.4 649.0L374.4 649.0L374.4 595.0L363.4 584.0L363.4 560.0ZM319.6 547.3L335.9 558.7L335.9 586.5L364.4 615.0L364.4 649.0L360.6 649.0L360.6 629.2L302.4 571.0L305.4 556.0ZM488.4 601.0L480.4 588.6L466.4 588.6L366.4 688.6L366.4 717.0L467.4 616.0L477.4 616.0ZM490.9 660.0L479.4 647.6L466.4 647.6L385.2 728.8L420.4 728.8L472.4 676.0L479.4 676.0ZM492.4 719.0L479.4 704.0L460.0 704.0L422.4 742.0L478.4 742.0ZM419.4 735.0L366.4 735.0L366.4 742.0L415.4 742.0ZM434.8 943.0L451.4 930.0L451.4 919.0L408.4 876.0L408.4 834.0L397.4 834.0L397.4 884.0L420.4 907.0L420.4 930.0ZM377.2 943.4L391.4 931.0L391.4 907.0L380.4 896.0L380.4 834.0L374.4 834.0L374.4 896.0L363.4 907.0L363.4 931.0ZM488.4 890.0L480.4 902.4L466.4 902.4L366.4 802.4L366.4 774.0L467.4 875.0L477.4 875.0ZM490.9 831.0L479.4 843.4L466.4 843.4L385.2 762.2L420.4 762.2L472.4 815.0L479.4 815.0ZM492.4 772.0L479.4 787.0L460.0 787.0L422.4 749.0L478.4 749.0ZM419.4 756.0L366.4 756.0L366.4 749.0L415.4 749.0ZM262.6 947.6L249.2 934.0L249.2 910.9L221.6 883.3L221.6 865.1L278.5 922.0L278.5 936.6ZM245.0 836.0L248.0 836.0L248.0 860.5L281.0 893.5L281.0 924.5L245.0 888.5ZM320.1 947.6L306.7 934.0L306.7 910.9L279.1 883.3L279.1 865.1L336.0 922.0L336.0 936.6ZM302.5 836.0L305.5 836.0L305.5 860.5L338.5 893.5L338.5 924.5L302.5 888.5Z" stroke-width="1.5" fill="#fff"/>
<path d="M104.0 534.2L104.0 537.4M114.4 534.2L114.4 537.4M124.8 534.2L124.8 537.4M135.2 534.2L135.2 537.4M145.6 534.2L145.6 537.4M156.0 534.2L156.0 537.4M166.4 534.2L166.4 537.4M176.8 534.2L176.8 537.4M187.2 534.2L187.2 537.4M197.6 534.2L197.6 537.4M208.0 534.2L208.0 537.4M218.4 534.2L218.4 537.4M228.8 534.2L228.8 537.4M239.2 534.2L239.2 537.4M249.6 534.2L249.6 537.4M260.0 534.2L260.0 537.4M270.4 534.2L270.4 537.4M280.8 534.2L280.8 537.4M79.0 558.4L82.2 558.4M79.0 568.8L82.2 568.8M79.0 579.2L82.2 579.2M79.0 589.5L82.2 589.5M79.0 599.9L82.2 599.9M79.0 610.3L82.2 610.3M79.0 620.7L82.2 620.7M79.0 631.1L82.2 631.1M79.0 641.5L82.2 641.5M79.0 651.9L82.2 651.9M79.0 662.3L82.2 662.3M79.0 672.7L82.2 672.7M79.0 683.1L82.2 683.1M79.0 693.4L82.2 693.4M79.0 703.8L82.2 703.8M79.0 714.2L82.2 714.2M79.0 724.6L82.2 724.6M79.0 735.0L82.2 735.0M79.0 745.4L82.2 745.4M104.0 956.8L104.0 953.6M114.4 956.8L114.4 953.6M124.8 956.8L124.8 953.6M135.2 956.8L135.2 953.6M145.6 956.8L145.6 953.6M156.0 956.8L156.0 953.6M166.4 956.8L166.4 953.6M176.8 956.8L176.8 953.6M187.2 956.8L187.2 953.6M197.6 956.8L197.6 953.6M208.0 956.8L208.0 953.6M218.4 956.8L218.4 953.6M228.8 956.8L228.8 953.6M239.2 956.8L239.2 953.6M249.6 956.8L249.6 953.6M260.0 956.8L260.0 953.6M270.4 956.8L270.4 953.6M280.8 956.8L280.8 953.6M79.0 932.6L82.2 932.6M79.0 922.2L82.2 922.2M79.0 911.8L82.2 911.8M79.0 901.5L82.2 901.5M79.0 891.1L82.2 891.1M79.0 880.7L82.2 880.7M79.0 870.3L82.2 870.3M79.0 859.9L82.2 859.9M79.0 849.5L82.2 849.5M79.0 839.1L82.2 839.1M79.0 828.7L82.2 828.7M79.0 818.3L82.2 818.3M79.0 807.9L82.2 807.9M79.0 797.6L82.2 797.6M79.0 787.2L82.2 787.2M79.0 776.8L82.2 776.8M79.0 766.4L82.2 766.4M79.0 756.0L82.2 756.0M79.0 745.6L82.2 745.6M478.4 534.2L478.4 537.4M468.0 534.2L468.0 537.4M457.6 534.2L457.6 537.4M447.2 534.2L447.2 537.4M436.8 534.2L436.8 537.4M426.4 534.2L426.4 537.4M416.0 534.2L416.0 537.4M405.6 534.2L405.6 537.4M395.2 534.2L395.2 537.4M384.8 534.2L384.8 537.4M374.4 534.2L374.4 537.4M364.0 534.2L364.0 537.4M353.6 534.2L353.6 537.4M343.2 534.2L343.2 537.4M332.8 534.2L332.8 537.4M322.4 534.2L322.4 537.4M312.0 534.2L312.0 537.4M301.6 534.2L301.6 537.4M503.4 558.4L500.2 558.4M503.4 568.8L500.2 568.8M503.4 579.2L500.2 579.2M503.4 589.5L500.2 589.5M503.4 599.9L500.2 599.9M503.4 610.3L500.2 610.3M503.4 620.7L500.2 620.7M503.4 631.1L500.2 631.1M503.4 641.5L500.2 641.5M503.4 651.9L500.2 651.9M503.4 662.3L500.2 662.3M503.4 672.7L500.2 672.7M503.4 683.1L500.2 683.1M503.4 693.4L500.2 693.4M503.4 703.8L500.2 703.8M503.4 714.2L500.2 714.2M503.4 724.6L500.2 724.6M503.4 735.0L500.2 735.0M503.4 745.4L500.2 745.4M478.4 956.8L478.4 953.6M468.0 956.8L468.0 953.6M457.6 956.8L457.6 953.6M447.2 956.8L447.2 953.6M436.8 956.8L436.8 953.6M426.4 956.8L426.4 953.6M416.0 956.8L416.0 953.6M405.6 956.8L405.6 953.6M395.2 956.8L395.2 953.6M384.8 956.8L384.8 953.6M374.4 956.8L374.4 953.6M364.0 956.8L364.0 953.6M353.6 956.8L353.6 953.6M343.2 956.8L343.2 953.6M332.8 956.8L332.8 953.6M322.4 956.8L322.4 953.6M312.0 956.8L312.0 953.6M301.6 956.8L301.6 953.6M503.4 932.6L500.2 932.6M503.4 922.2L500.2 922.2M503.4 911.8L500.2 911.8M503.4 901.5L500.2 901.5M503.4 891.1L500.2 891.1M503.4 880.7L500.2 880.7M503.4 870.3L500.2 870.3M503.4 859.9L500.2 859.9M503.4 849.5L500.2 849.5M503.4 839.1L500.2 839.1M503.4 828.7L500.2 828.7M503.4 818.3L500.2 818.3M503.4 807.9L500.2 807.9M503.4 797.6L500.2 797.6M503.4 787.2L500.2 787.2M503.4 776.8L500.2 776.8M503.4 766.4L500.2 766.4M503.4 756.0L500.2 756.0M503.4 745.6L500.2 745.6" stroke-width="6.4"/>
<path d="M418.9 735.0L366.4 735.0L366.4 742.0L414.4 742.0ZM418.9 756.0L366.4 756.0L366.4 749.0L414.4 749.0Z" fill="#000" stroke="none"/>
</g>
<g fill="#fff" stroke="#000" stroke-width="1.5"><circle cx="104.0" cy="540.8" r="2.6"/><circle cx="114.4" cy="540.8" r="2.6"/><circle cx="124.8" cy="540.8" r="2.6"/><circle cx="135.2" cy="540.8" r="2.6"/><circle cx="145.6" cy="540.8" r="2.6"/><circle cx="156.0" cy="540.8" r="2.6"/><circle cx="166.4" cy="540.8" r="2.6"/><circle cx="176.8" cy="540.8" r="2.6"/><circle cx="187.2" cy="540.8" r="2.6"/><circle cx="197.6" cy="540.8" r="2.6"/><circle cx="208.0" cy="540.8" r="2.6"/><circle cx="218.4" cy="540.8" r="2.6"/><circle cx="228.8" cy="540.8" r="2.6"/><circle cx="239.2" cy="540.8" r="2.6"/><circle cx="249.6" cy="540.8" r="2.6"/><circle cx="260.0" cy="540.8" r="2.6"/><circle cx="270.4" cy="540.8" r="2.6"/><circle cx="280.8" cy="540.8" r="2.6"/><circle cx="85.6" cy="558.4" r="2.6"/><circle cx="85.6" cy="568.8" r="2.6"/><circle cx="85.6" cy="579.2" r="2.6"/><circle cx="85.6" cy="589.5" r="2.6"/><circle cx="85.6" cy="599.9" r="2.6"/><circle cx="85.6" cy="610.3" r="2.6"/><circle cx="85.6" cy="620.7" r="2.6"/><circle cx="85.6" cy="631.1" r="2.6"/><circle cx="85.6" cy="641.5" r="2.6"/><circle cx="85.6" cy="651.9" r="2.6"/><circle cx="85.6" cy="662.3" r="2.6"/><circle cx="85.6" cy="672.7" r="2.6"/><circle cx="85.6" cy="683.1" r="2.6"/><circle cx="85.6" cy="693.4" r="2.6"/><circle cx="85.6" cy="703.8" r="2.6"/><circle cx="85.6" cy="714.2" r="2.6"/><circle cx="85.6" cy="724.6" r="2.6"/><circle cx="85.6" cy="735.0" r="2.6"/><circle cx="85.6" cy="745.4" r="2.6"/><circle cx="104.0" cy="950.2" r="2.6"/><circle cx="114.4" cy="950.2" r="2.6"/><circle cx="124.8" cy="950.2" r="2.6"/><circle cx="135.2" cy="950.2" r="2.6"/><circle cx="145.6" cy="950.2" r="2.6"/><circle cx="156.0" cy="950.2" r="2.6"/><circle cx="166.4" cy="950.2" r="2.6"/><circle cx="176.8" cy="950.2" r="2.6"/><circle cx="187.2" cy="950.2" r="2.6"/><circle cx="197.6" cy="950.2" r="2.6"/><circle cx="208.0" cy="950.2" r="2.6"/><circle cx="218.4" cy="950.2" r="2.6"/><circle cx="228.8" cy="950.2" r="2.6"/><circle cx="239.2" cy="950.2" r="2.6"/><circle cx="249.6" cy="950.2" r="2.6"/><circle cx="260.0" cy="950.2" r="2.6"/><circle cx="270.4" cy="950.2" r="2.6"/><circle cx="280.8" cy="950.2" r="2.6"/><circle cx="85.6" cy="932.6" r="2.6"/><circle cx="85.6" cy="922.2" r="2.6"/><circle cx="85.6" cy="911.8" r="2.6"/><circle cx="85.6" cy="901.5" r="2.6"/><circle cx="85.6" cy="891.1" r="2.6"/><circle cx="85.6" cy="880.7" r="2.6"/><circle cx="85.6" cy="870.3" r="2.6"/><circle cx="85.6" cy="859.9" r="2.6"/><circle cx="85.6" cy="849.5" r="2.6"/><circle cx="85.6" cy="839.1" r="2.6"/><circle cx="85.6" cy="828.7" r="2.6"/><circle cx="85.6" cy="818.3" r="2.6"/><circle cx="85.6" cy="807.9" r="2.6"/><circle cx="85.6" cy="797.6" r="2.6"/><circle cx="85.6" cy="787.2" r="2.6"/><circle cx="85.6" cy="776.8" r="2.6"/><circle cx="85.6" cy="766.4" r="2.6"/><circle cx="85.6" cy="756.0" r="2.6"/><circle cx="85.6" cy="745.6" r="2.6"/><circle cx="478.4" cy="540.8" r="2.6"/><circle cx="468.0" cy="540.8" r="2.6"/><circle cx="457.6" cy="540.8" r="2.6"/><circle cx="447.2" cy="540.8" r="2.6"/><circle cx="436.8" cy="540.8" r="2.6"/><circle cx="426.4" cy="540.8" r="2.6"/><circle cx="416.0" cy="540.8" r="2.6"/><circle cx="405.6" cy="540.8" r="2.6"/><circle cx="395.2" cy="540.8" r="2.6"/><circle cx="384.8" cy="540.8" r="2.6"/><circle cx="374.4" cy="540.8" r="2.6"/><circle cx="364.0" cy="540.8" r="2.6"/><circle cx="353.6" cy="540.8" r="2.6"/><circle cx="343.2" cy="540.8" r="2.6"/><circle cx="332.8" cy="540.8" r="2.6"/><circle cx="322.4" cy="540.8" r="2.6"/><circle cx="312.0" cy="540.8" r="2.6"/><circle cx="301.6" cy="540.8" r="2.6"/><circle cx="496.8" cy="558.4" r="2.6"/><circle cx="496.8" cy="568.8" r="2.6"/><circle cx="496.8" cy="579.2" r="2.6"/><circle cx="496.8" cy="589.5" r="2.6"/><circle cx="496.8" cy="599.9" r="2.6"/><circle cx="496.8" cy="610.3" r="2.6"/><circle cx="496.8" cy="620.7" r="2.6"/><circle cx="496.8" cy="631.1" r="2.6"/><circle cx="496.8" cy="641.5" r="2.6"/><circle cx="496.8" cy="651.9" r="2.6"/><circle cx="496.8" cy="662.3" r="2.6"/><circle cx="496.8" cy="672.7" r="2.6"/><circle cx="496.8" cy="683.1" r="2.6"/><circle cx="496.8" cy="693.4" r="2.6"/><circle cx="496.8" cy="703.8" r="2.6"/><circle cx="496.8" cy="714.2" r="2.6"/><circle cx="496.8" cy="724.6" r="2.6"/><circle cx="496.8" cy="735.0" r="2.6"/><circle cx="496.8" cy="745.4" r="2.6"/><circle cx="478.4" cy="950.2" r="2.6"/><circle cx="468.0" cy="950.2" r="2.6"/><circle cx="457.6" cy="950.2" r="2.6"/><circle cx="447.2" cy="950.2" r="2.6"/><circle cx="436.8" cy="950.2" r="2.6"/><circle cx="426.4" cy="950.2" r="2.6"/><circle cx="416.0" cy="950.2" r="2.6"/><circle cx="405.6" cy="950.2" r="2.6"/><circle cx="395.2" cy="950.2" r="2.6"/><circle cx="384.8" cy="950.2" r="2.6"/><circle cx="374.4" cy="950.2" r="2.6"/><circle cx="364.0" cy="950.2" r="2.6"/><circle cx="353.6" cy="950.2" r="2.6"/><circle cx="343.2" cy="950.2" r="2.6"/><circle cx="332.8" cy="950.2" r="2.6"/><circle cx="322.4" cy="950.2" r="2.6"/><circle cx="312.0" cy="950.2" r="2.6"/><circle cx="301.6" cy="950.2" r="2.6"/><circle cx="496.8" cy="932.6" r="2.6"/><circle cx="496.8" cy="922.2" r="2.6"/><circle cx="496.8" cy="911.8" r="2.6"/><circle cx="496.8" cy="901.5" r="2.6"/><circle cx="496.8" cy="891.1" r="2.6"/><circle cx="496.8" cy="880.7" r="2.6"/><circle cx="496.8" cy="870.3" r="2.6"/><circle cx="496.8" cy="859.9" r="2.6"/><circle cx="496.8" cy="849.5" r="2.6"/><circle cx="496.8" cy="839.1" r="2.6"/><circle cx="496.8" cy="828.7" r="2.6"/><circle cx="496.8" cy="818.3" r="2.6"/><circle cx="496.8" cy="807.9" r="2.6"/><circle cx="496.8" cy="797.6" r="2.6"/><circle cx="496.8" cy="787.2" r="2.6"/><circle cx="496.8" cy="776.8" r="2.6"/><circle cx="496.8" cy="766.4" r="2.6"/><circle cx="496.8" cy="756.0" r="2.6"/><circle cx="496.8" cy="745.6" r="2.6"/></g>
<g fill="#000"><circle cx="113.0" cy="603.0" r="7"/><circle cx="113.0" cy="660.0" r="7"/><circle cx="113.0" cy="831.0" r="7"/><circle cx="113.0" cy="888.0" r="7"/><circle cx="113.2" cy="717.7" r="7"/><circle cx="113.2" cy="773.3" r="7"/><circle cx="147.6" cy="567.6" r="7"/><circle cx="147.6" cy="923.4" r="7"/><circle cx="170.0" cy="717.7" r="7"/><circle cx="170.0" cy="773.3" r="7"/><circle cx="205.2" cy="567.6" r="7"/><circle cx="205.2" cy="923.4" r="7"/><circle cx="262.6" cy="886.4" r="7"/><circle cx="262.6" cy="925.0" r="7"/><circle cx="262.8" cy="567.7" r="7"/><circle cx="262.8" cy="606.0" r="7"/><circle cx="319.6" cy="567.7" r="7"/><circle cx="319.6" cy="606.0" r="7"/><circle cx="320.1" cy="886.4" r="7"/><circle cx="320.1" cy="925.0" r="7"/><circle cx="377.2" cy="567.6" r="7"/><circle cx="377.2" cy="923.4" r="7"/><circle cx="412.0" cy="717.7" r="7"/><circle cx="412.0" cy="773.3" r="7"/><circle cx="434.8" cy="567.6" r="7"/><circle cx="434.8" cy="923.4" r="7"/><circle cx="469.2" cy="719.0" r="7"/><circle cx="469.2" cy="772.0" r="7"/><circle cx="469.4" cy="603.0" r="7"/><circle cx="469.4" cy="660.0" r="7"/><circle cx="469.4" cy="831.0" r="7"/><circle cx="469.4" cy="888.0" r="7"/></g><rect x="77.6" y="532.8" width="427.4" height="425.9" fill="none" stroke="#000" stroke-width="2.4"/><g fill="#000"><rect x="225" y="507.5" width="49" height="19"/><rect x="307.5" y="507.5" width="57.5" height="19"/><rect x="289" y="516" width="14" height="10.5"/><rect x="225" y="966" width="50" height="15"/><rect x="307.5" y="966" width="57.5" height="15"/><rect x="289" y="973" width="14" height="8"/><rect x="27" y="644" width="19" height="6"/><rect x="11" y="672" width="10" height="57"/><rect x="27" y="672" width="20" height="57"/><rect x="11" y="734.8" width="10" height="6.6"/><rect x="27" y="734" width="9" height="4"/><rect x="34" y="738" width="13" height="14"/><rect x="11" y="762.5" width="10" height="49.5"/><rect x="27" y="762.5" width="20" height="49.5"/><rect x="11" y="822.7" width="14.5" height="9.3"/><rect x="27" y="822.7" width="19" height="6"/><rect x="536" y="672" width="11" height="57"/><rect x="536" y="762.5" width="11" height="49.5"/><rect x="537" y="735" width="9" height="22"/></g><rect x="47.5" y="669" width="29.5" height="152" fill="#fff" stroke="#000" stroke-width="1.2"/><path d="M62 669V821" stroke="#000" stroke-width="1" fill="none"/><path d="M50.4 677H58.6M65.6 677H73.8" stroke="#000" stroke-width="150" stroke-dasharray="0" fill="none" opacity="0"/><path d="M50.4 676H58.6M65.6 676H73.8M50.4 684.7H58.6M65.6 684.7H73.8M50.4 693.4000000000001H58.6M65.6 693.4000000000001H73.8M50.4 702.1000000000001H58.6M65.6 702.1000000000001H73.8M50.4 710.8000000000002H58.6M65.6 710.8000000000002H73.8M50.4 719.5000000000002H58.6M65.6 719.5000000000002H73.8M50.4 728.2000000000003H58.6M65.6 728.2000000000003H73.8M50.4 763.0000000000005H58.6M65.6 763.0000000000005H73.8M50.4 771.7000000000005H58.6M65.6 771.7000000000005H73.8M50.4 780.4000000000005H58.6M65.6 780.4000000000005H73.8M50.4 789.1000000000006H58.6M65.6 789.1000000000006H73.8M50.4 797.8000000000006H58.6M65.6 797.8000000000006H73.8M50.4 806.5000000000007H58.6M65.6 806.5000000000007H73.8M50.4 815.2000000000007H58.6M65.6 815.2000000000007H73.8" stroke="#000" stroke-width="4.6" fill="none"/><path d="M48 680.3H76M48 689.0H76M48 697.7H76M48 706.4H76M48 715.1H76M48 723.8H76M48 758.6H76M48 767.3H76M48 776.0H76M48 784.7H76M48 793.4H76M48 802.1H76M48 810.8H76" stroke="#000" stroke-width=".8" fill="none"/><path d="M48.5 672.5h4v4h-4zM71.5 672.5h4v4h-4zM48.5 814h4v4h-4zM71.5 814h4v4h-4z" stroke="#000" stroke-width="1" fill="none"/><rect x="56" y="738" width="12" height="15" fill="#000"/><rect x="506.0" y="669" width="29.5" height="152" fill="#fff" stroke="#000" stroke-width="1.2"/><path d="M520.5 669V821" stroke="#000" stroke-width="1" fill="none"/><path d="M508.9 677H517.1M524.1 677H532.3" stroke="#000" stroke-width="150" stroke-dasharray="0" fill="none" opacity="0"/><path d="M508.9 676H517.1M524.1 676H532.3M508.9 684.7H517.1M524.1 684.7H532.3M508.9 693.4000000000001H517.1M524.1 693.4000000000001H532.3M508.9 702.1000000000001H517.1M524.1 702.1000000000001H532.3M508.9 710.8000000000002H517.1M524.1 710.8000000000002H532.3M508.9 719.5000000000002H517.1M524.1 719.5000000000002H532.3M508.9 728.2000000000003H517.1M524.1 728.2000000000003H532.3M508.9 763.0000000000005H517.1M524.1 763.0000000000005H532.3M508.9 771.7000000000005H517.1M524.1 771.7000000000005H532.3M508.9 780.4000000000005H517.1M524.1 780.4000000000005H532.3M508.9 789.1000000000006H517.1M524.1 789.1000000000006H532.3M508.9 797.8000000000006H517.1M524.1 797.8000000000006H532.3M508.9 806.5000000000007H517.1M524.1 806.5000000000007H532.3M508.9 815.2000000000007H517.1M524.1 815.2000000000007H532.3" stroke="#000" stroke-width="4.6" fill="none"/><path d="M506.5 680.3H534.5M506.5 689.0H534.5M506.5 697.7H534.5M506.5 706.4H534.5M506.5 715.1H534.5M506.5 723.8H534.5M506.5 758.6H534.5M506.5 767.3H534.5M506.5 776.0H534.5M506.5 784.7H534.5M506.5 793.4H534.5M506.5 802.1H534.5M506.5 810.8H534.5" stroke="#000" stroke-width=".8" fill="none"/><path d="M507.0 672.5h4v4h-4zM530.0 672.5h4v4h-4zM507.0 814h4v4h-4zM530.0 814h4v4h-4z" stroke="#000" stroke-width="1" fill="none"/><rect x="514.5" y="738" width="12" height="15" fill="#000"/><path d="M281 511h1.500000000000001M285 511h1.5M290 510h3M297 510h3M304 511h1.5M281 969h1.5M285 969h1.5M290 969h3M297 968h3M304 969h1.5" stroke="#000" stroke-width="1.6" fill="none"/><rect x="293" y="516" width="6" height="4" fill="#fff"/><text x="287.5" y="601" font-family="Noto Sans CJK SC, sans-serif" font-size="7.5" font-weight="700" fill="#000">正</text><text x="286.5" y="592" font-family="Liberation Sans, sans-serif" font-size="5" font-weight="700" fill="#000">TK01</text><text x="289.5" y="586" font-family="Liberation Sans, sans-serif" font-size="5" font-weight="700" fill="#000">9</text><clipPath id="yc"><rect x="169" y="647" width="219" height="191"/></clipPath><rect x="169" y="647" width="219" height="191" fill="#f3f1a6"/><g clip-path="url(#yc)"><path d="M231.5 657.9L111.5 537.9L111.5 542.1L231.5 662.1ZM252.0 660.4L228.5 660.4L228.5 660.4L108.5 542.4L108.5 547.6L228.5 669.6L252.0 669.6ZM325.5 657.9L445.5 537.9L445.5 542.1L325.5 662.1ZM305.0 660.4L328.5 660.4L328.5 660.4L448.5 542.4L448.5 547.6L328.5 669.6L305.0 669.6ZM221.9 673.6L101.9 553.6L101.9 557.8L221.9 677.8ZM252.0 676.1L218.9 676.1L218.9 676.1L98.9 558.1L98.9 563.3L218.9 685.3L252.0 685.3ZM335.1 673.6L455.1 553.6L455.1 557.8L335.1 677.8ZM305.0 676.1L338.1 676.1L338.1 676.1L458.1 558.1L458.1 563.3L338.1 685.3L305.0 685.3ZM214.4 690.1L94.4 570.1L94.4 574.3L214.4 694.3ZM252.0 692.6L211.4 692.6L211.4 692.6L91.4 574.6L91.4 579.8L211.4 701.8L252.0 701.8ZM342.6 690.1L462.6 570.1L462.6 574.3L342.6 694.3ZM305.0 692.6L345.6 692.6L345.6 692.6L465.6 574.6L465.6 579.8L345.6 701.8L305.0 701.8ZM209.0 706.1L89.0 586.1L89.0 590.3L209.0 710.3ZM252.0 708.6L206.0 708.6L206.0 708.6L86.0 590.6L86.0 595.8L206.0 717.8L252.0 717.8ZM348.0 706.1L468.0 586.1L468.0 590.3L348.0 710.3ZM305.0 708.6L351.0 708.6L351.0 708.6L471.0 590.6L471.0 595.8L351.0 717.8L305.0 717.8ZM205.8 722.2L85.8 602.2L85.8 606.4L205.8 726.4ZM252.0 724.7L202.8 724.7L202.8 724.7L82.8 606.7L82.8 611.9L202.8 733.9L252.0 733.9ZM351.2 722.2L471.2 602.2L471.2 606.4L351.2 726.4ZM305.0 724.7L354.2 724.7L354.2 724.7L474.2 606.7L474.2 611.9L354.2 733.9L305.0 733.9ZM252.0 740.3L192.0 740.3L192.0 749.5L252.0 749.5ZM305.0 740.3L365.0 740.3L365.0 749.5L305.0 749.5ZM205.8 764.3L85.8 884.3L85.8 888.5L205.8 768.5ZM252.0 756.8L202.8 756.8L202.8 756.8L82.8 878.8L82.8 884.0L202.8 766.0L252.0 766.0ZM351.2 764.3L471.2 884.3L471.2 888.5L351.2 768.5ZM305.0 756.8L354.2 756.8L354.2 756.8L474.2 878.8L474.2 884.0L354.2 766.0L305.0 766.0ZM209.0 780.4L89.0 900.4L89.0 904.6L209.0 784.6ZM252.0 772.9L206.0 772.9L206.0 772.9L86.0 894.9L86.0 900.1L206.0 782.1L252.0 782.1ZM348.0 780.4L468.0 900.4L468.0 904.6L348.0 784.6ZM305.0 772.9L351.0 772.9L351.0 772.9L471.0 894.9L471.0 900.1L351.0 782.1L305.0 782.1ZM216.5 796.4L96.5 916.4L96.5 920.6L216.5 800.6ZM252.0 788.9L213.5 788.9L213.5 788.9L93.5 910.9L93.5 916.1L213.5 798.1L252.0 798.1ZM340.5 796.4L460.5 916.4L460.5 920.6L340.5 800.6ZM305.0 788.9L343.5 788.9L343.5 788.9L463.5 910.9L463.5 916.1L343.5 798.1L305.0 798.1ZM225.0 812.5L105.0 932.5L105.0 936.7L225.0 816.7ZM252.0 805.0L222.0 805.0L222.0 805.0L102.0 927.0L102.0 932.2L222.0 814.2L252.0 814.2ZM332.0 812.5L452.0 932.5L452.0 936.7L332.0 816.7ZM305.0 805.0L335.0 805.0L335.0 805.0L455.0 927.0L455.0 932.2L335.0 814.2L305.0 814.2ZM233.7 828.6L113.7 948.6L113.7 952.8L233.7 832.8ZM252.0 821.1L230.7 821.1L230.7 821.1L110.7 943.1L110.7 948.3L230.7 830.3L252.0 830.3ZM323.3 828.6L443.3 948.6L443.3 952.8L323.3 832.8ZM305.0 821.1L326.3 821.1L326.3 821.1L446.3 943.1L446.3 948.3L326.3 830.3L305.0 830.3Z" fill="#5f5d15"/><path d="M192.0 743.4L167.0 743.4M192.0 746.9L167.0 746.9M365.0 743.4L390.0 743.4M365.0 746.9L390.0 746.9" stroke="#6b691c" stroke-width="1.6" fill="none"/><path d="M252 667.5H331M252 683.2H331M252 699.7H331M252 715.7H331M252 731.8H331M252 747.4H331M252 763.9H331M252 780.0H331M252 796.0H331M252 812.1H331M252 828.2H331" stroke="#5f5d15" stroke-width="4.2" stroke-dasharray="11 3 6 3" fill="none"/><path d="M254 663l4 -5l4 5zM263.6 663l4 -5l4 5zM273.20000000000005 663l4 -5l4 5zM282.80000000000007 663l4 -5l4 5zM292.4000000000001 663l4 -5l4 5zM302.0000000000001 663l4 -5l4 5zM311.60000000000014 663l4 -5l4 5zM321.20000000000016 663l4 -5l4 5zM254 678.7l4 -5l4 5zM263.6 678.7l4 -5l4 5zM273.20000000000005 678.7l4 -5l4 5zM282.80000000000007 678.7l4 -5l4 5zM292.4000000000001 678.7l4 -5l4 5zM302.0000000000001 678.7l4 -5l4 5zM311.60000000000014 678.7l4 -5l4 5zM321.20000000000016 678.7l4 -5l4 5zM254 695.2l4 -5l4 5zM263.6 695.2l4 -5l4 5zM273.20000000000005 695.2l4 -5l4 5zM282.80000000000007 695.2l4 -5l4 5zM292.4000000000001 695.2l4 -5l4 5zM302.0000000000001 695.2l4 -5l4 5zM311.60000000000014 695.2l4 -5l4 5zM321.20000000000016 695.2l4 -5l4 5zM254 711.2l4 -5l4 5zM263.6 711.2l4 -5l4 5zM273.20000000000005 711.2l4 -5l4 5zM282.80000000000007 711.2l4 -5l4 5zM292.4000000000001 711.2l4 -5l4 5zM302.0000000000001 711.2l4 -5l4 5zM311.60000000000014 711.2l4 -5l4 5zM321.20000000000016 711.2l4 -5l4 5zM254 727.3l4 -5l4 5zM263.6 727.3l4 -5l4 5zM273.20000000000005 727.3l4 -5l4 5zM282.80000000000007 727.3l4 -5l4 5zM292.4000000000001 727.3l4 -5l4 5zM302.0000000000001 727.3l4 -5l4 5zM311.60000000000014 727.3l4 -5l4 5zM321.20000000000016 727.3l4 -5l4 5zM254 742.9l4 -5l4 5zM263.6 742.9l4 -5l4 5zM273.20000000000005 742.9l4 -5l4 5zM282.80000000000007 742.9l4 -5l4 5zM292.4000000000001 742.9l4 -5l4 5zM302.0000000000001 742.9l4 -5l4 5zM311.60000000000014 742.9l4 -5l4 5zM321.20000000000016 742.9l4 -5l4 5zM254 759.4l4 -5l4 5zM263.6 759.4l4 -5l4 5zM273.20000000000005 759.4l4 -5l4 5zM282.80000000000007 759.4l4 -5l4 5zM292.4000000000001 759.4l4 -5l4 5zM302.0000000000001 759.4l4 -5l4 5zM311.60000000000014 759.4l4 -5l4 5zM321.20000000000016 759.4l4 -5l4 5zM254 775.5l4 -5l4 5zM263.6 775.5l4 -5l4 5zM273.20000000000005 775.5l4 -5l4 5zM282.80000000000007 775.5l4 -5l4 5zM292.4000000000001 775.5l4 -5l4 5zM302.0000000000001 775.5l4 -5l4 5zM311.60000000000014 775.5l4 -5l4 5zM321.20000000000016 775.5l4 -5l4 5zM254 791.5l4 -5l4 5zM263.6 791.5l4 -5l4 5zM273.20000000000005 791.5l4 -5l4 5zM282.80000000000007 791.5l4 -5l4 5zM292.4000000000001 791.5l4 -5l4 5zM302.0000000000001 791.5l4 -5l4 5zM311.60000000000014 791.5l4 -5l4 5zM321.20000000000016 791.5l4 -5l4 5zM254 807.6l4 -5l4 5zM263.6 807.6l4 -5l4 5zM273.20000000000005 807.6l4 -5l4 5zM282.80000000000007 807.6l4 -5l4 5zM292.4000000000001 807.6l4 -5l4 5zM302.0000000000001 807.6l4 -5l4 5zM311.60000000000014 807.6l4 -5l4 5zM321.20000000000016 807.6l4 -5l4 5zM254 823.7l4 -5l4 5zM263.6 823.7l4 -5l4 5zM273.20000000000005 823.7l4 -5l4 5zM282.80000000000007 823.7l4 -5l4 5zM292.4000000000001 823.7l4 -5l4 5zM302.0000000000001 823.7l4 -5l4 5zM311.60000000000014 823.7l4 -5l4 5zM321.20000000000016 823.7l4 -5l4 5z" fill="#5f5d15" opacity=".8"/><path d="M291.5 650V836" stroke="#f3f1a6" stroke-width="3"/><g fill="#e02818"><rect x="236" y="664" width="1.4" height="2.4"/><rect x="242" y="674" width="1.4" height="2.4"/><rect x="258" y="662" width="1.4" height="2.4"/><rect x="268" y="666" width="1.4" height="2.4"/><rect x="277" y="668" width="1.4" height="2.4"/><rect x="313" y="662" width="1.4" height="2.4"/><rect x="322" y="664" width="1.4" height="2.4"/><rect x="313" y="676" width="1.4" height="2.4"/><rect x="242" y="682" width="1.4" height="2.4"/><rect x="205" y="684" width="1.4" height="2.4"/><rect x="352" y="684" width="1.4" height="2.4"/><rect x="240" y="792" width="1.4" height="2.4"/><rect x="205" y="828" width="1.4" height="2.4"/><rect x="352" y="792" width="1.4" height="2.4"/><rect x="312" y="790" width="1.4" height="2.4"/><rect x="283" y="744" width="1.4" height="2.4"/><rect x="268" y="672" width="1.4" height="2.4"/><rect x="296" y="682" width="1.4" height="2.4"/><rect x="258" y="690" width="1.4" height="2.4"/></g></g><circle cx="170" cy="717.7" r="7" fill="#000"/><circle cx="170" cy="775.3" r="7" fill="#000"/><rect x="169" y="647" width="219" height="191" fill="none" stroke="#e6280f" stroke-width="1.6"/><path d="M162 647.5H176M169 640V655" stroke="#1230e8" stroke-width="1.6" fill="none"/><path d="M69 960H83M76 953V967M498 960H512M505 953V967" stroke="#e81010" stroke-width="1.4" fill="none"/></svg><!--CHIP1-->
<div class="cb" style="left:384px;top:407px;"><svg width="13" height="13" viewBox="0 0 13 13" fill="none" stroke="#fff" stroke-width="1.7"><path d="M2.5 6.5L5.3 9.3L10.5 3.5"/></svg></div>
<div class="t" style="left:402px;top:409px;font-size:11.5px;color:#333;">VG<u>S</u>td_A</div>
<div class="cb" style="left:460px;top:407px;"><svg width="13" height="13" viewBox="0 0 13 13" fill="none" stroke="#fff" stroke-width="1.7"><path d="M2.5 6.5L5.3 9.3L10.5 3.5"/></svg></div>
<div class="t" style="left:478px;top:409px;font-size:11.5px;color:#333;">VG<u>S</u>td_B</div>

<div class="a" style="left:557px;top:73px;width:6px;height:908px;background:#a9b5bf;"></div>
<div class="a" style="left:563px;top:73px;width:50px;height:908px;background:#eceff1;"></div>
<!-- camera -->
<svg class="a" style="left:570px;top:82px" width="36" height="32" viewBox="0 0 36 32"><path d="M3 6H10L12 2H24L26 6H33Q35 6 35 8V28Q35 30 33 30H3Q1 30 1 28V8Q1 6 3 6Z" fill="#555"/><circle cx="18" cy="17.5" r="7.500000000000001" fill="#eceff1"/><circle cx="18" cy="17.5" r="4.3" fill="#555"/></svg>
<!-- grid circle -->
<svg class="a" style="left:570px;top:129px" width="36" height="36" viewBox="0 0 36 36"><defs><clipPath id="gc"><circle cx="18" cy="18" r="17"/></clipPath></defs><circle cx="18" cy="18" r="17" fill="#555"/><g clip-path="url(#gc)" stroke="#eceff1" stroke-width="1.2"><path d="M5.5 0V36M10.5 0V36M15.5 0V36M20.5 0V36M25.5 0V36M30.5 0V36M0 5.5H36M0 10.5H36M0 15.5H36M0 20.5H36M0 25.5H36M0 30.5H36"/></g></svg>
<!-- selected -->
<div class="a" style="left:566px;top:173px;width:44px;height:44px;border-radius:50%;background:#b0bec5;"></div>
<svg class="a" style="left:570px;top:177px" width="36" height="36" viewBox="0 0 36 36" fill="none" stroke="#5a6268" stroke-width="1.5"><path d="M31.5 19A14 14 0 1 0 15 31.7"/><path d="M10 11H14V15H10ZM14 7H18V11H14ZM14 15H18V19H14ZM6 15H10V19H6ZM10 19H14V23H10ZM18 11H22V15H18Z" stroke-width="1"/><rect x="23" y="13" width="3" height="3" stroke-width="1"/><path d="M22 22H32M22 26H32M22 30H32M18 22H19.500000000000004M18 26H19.5M18 30H19.5" stroke-width="1.8"/></svg>
<!-- ruler/pencil -->
<svg class="a" style="left:570px;top:225px" width="36" height="36" viewBox="0 0 36 36"><g transform="rotate(45 18 18)" fill="#555"><rect x="-5" y="13.2" width="33" height="9.6"/><path d="M30 13.2H34L40 18L34 22.8H30Z"/></g><g transform="rotate(-45 18 18)"><rect x="-5.5" y="12.4" width="47" height="11.2" fill="#555" stroke="#eceff1" stroke-width="1.6"/><path d="M1 12.4V17.5M7 12.4V16M13 12.4V17.5M19 12.4V16M25 12.4V17.5M31 12.4V16M37 12.4V17.5" stroke="#eceff1" stroke-width="1.5" fill="none"/></g></svg>
<!-- image circle -->
<svg class="a" style="left:570px;top:274px" width="36" height="36" viewBox="0 0 36 36"><circle cx="18" cy="18" r="17" fill="#555"/><g fill="none" stroke="#eceff1" stroke-width="1.3"><rect x="9" y="10" width="18" height="16"/><rect x="7.5" y="8.5" width="3" height="3" fill="#555"/><rect x="25.5" y="8.5" width="3" height="3" fill="#555"/><rect x="7.5" y="24.5" width="3" height="3" fill="#555"/><rect x="25.500000000000004" y="24.5" width="3" height="3" fill="#555"/><path d="M11 23L16 16L19 20L21.5 17.5L25 23Z"/></g></svg>
<!-- checklist -->
<svg class="a" style="left:570px;top:324px" width="36" height="33" viewBox="0 0 36 33" fill="none" stroke="#555" stroke-width="1.5"><rect x="1" y="1.5" width="12" height="12"/><rect x="1" y="18.5" width="12" height="12"/><path d="M3.5 7L6.5 10L11 4M3.5 24L6.5 27L11 21"/><path d="M18 5H34M18 11H34M18 22H34M18 28H34" stroke-width="1.4"/></svg>

<div class="a" style="left:613px;top:73px;width:6px;height:568px;background:#f5f6f8;"></div>
<div class="a" style="left:619px;top:79px;width:576px;height:554px;border:1px solid #e2e2e2;box-sizing:border-box;background:#fff;"></div>
<div class="a" style="left:1199px;top:79px;width:576px;height:554px;border:1px solid #e2e2e2;box-sizing:border-box;background:#fff;"></div>
<svg class="a" style="left:632px;top:80px" width="552" height="551" viewBox="632 80 552 551"><rect x="632" y="80" width="552" height="551" fill="#a2a2a2"/><g fill="none" stroke-linejoin="miter"><path transform="translate(1.3,0)" d="M629.0 581.0L1189.0 1141.0M629.0 560.6L1189.0 1120.6M629.0 540.1L1189.0 1100.2M629.0 519.7L1189.0 1079.7M629.0 499.2L1189.0 1059.2M629.0 478.8L1189.0 1038.8M629.0 458.4L1189.0 1018.4M629.0 437.9L1189.0 997.9M629.0 417.5L1189.0 977.5M629.0 397.0L1189.0 957.0M629.0 376.6L1189.0 936.5M629.0 356.1L1189.0 916.1M629.0 254.8L1189.0 814.8M629.0 230.1L1189.0 790.1M629.0 205.4L1189.0 765.4M629.0 180.7L1189.0 740.7M652.9 80V179.9L1189.0 716.0M676.2 80V178.5L1189.0 691.3M699.5 80V177.1L1189.0 666.6M722.8 80V175.7L1189.0 641.9M746.1 80V174.3L1189.0 617.2M769.4 80V172.9L1189.0 592.5M792.7 80V171.5L1189.0 567.8M816.0 80V170.1L1189.0 543.1M862.6 80V116.7L1189.0 443.1M885.9 80V115.1L1189.0 418.2M909.2 80V113.5L1189.0 393.3M932.6 80V112.0L1189.0 368.4M956.0 80V110.5L1189.0 343.5M979.3 80V108.9L1189.0 318.6M1002.7 80V107.4L1189.0 293.7M1026.0 80V105.8L1189.0 268.8M1049.4 80V104.3L1189.0 243.9M1072.7 80V102.7L1189.0 219.0M1096.1 80V101.2L1189.0 194.1M1119.4 80V99.6L1189.0 169.2M629.0 601.5L1189.0 1161.5M629.0 279.5L1189.0 839.5M839.2 80V118.2L1189.0 468.0M1168.5 77.0L1189.0 97.5" stroke="#bdbdbd" stroke-width="1" opacity=".7"/><path d="M629.0 581.0L1189.0 1141.0M629.0 560.6L1189.0 1120.6M629.0 540.1L1189.0 1100.2M629.0 519.7L1189.0 1079.7M629.0 499.2L1189.0 1059.2M629.0 478.8L1189.0 1038.8M629.0 458.4L1189.0 1018.4M629.0 437.9L1189.0 997.9M629.0 417.5L1189.0 977.5M629.0 397.0L1189.0 957.0M629.0 376.6L1189.0 936.5M629.0 356.1L1189.0 916.1M629.0 254.8L1189.0 814.8M629.0 230.1L1189.0 790.1M629.0 205.4L1189.0 765.4M629.0 180.7L1189.0 740.7M652.9 80V179.9L1189.0 716.0M676.2 80V178.5L1189.0 691.3M699.5 80V177.1L1189.0 666.6M722.8 80V175.7L1189.0 641.9M746.1 80V174.3L1189.0 617.2M769.4 80V172.9L1189.0 592.5M792.7 80V171.5L1189.0 567.8M816.0 80V170.1L1189.0 543.1M862.6 80V116.7L1189.0 443.1M885.9 80V115.1L1189.0 418.2M909.2 80V113.5L1189.0 393.3M932.6 80V112.0L1189.0 368.4M956.0 80V110.5L1189.0 343.5M979.3 80V108.9L1189.0 318.6M1002.7 80V107.4L1189.0 293.7M1026.0 80V105.8L1189.0 268.8M1049.4 80V104.3L1189.0 243.9M1072.7 80V102.7L1189.0 219.0M1096.1 80V101.2L1189.0 194.1M1119.4 80V99.6L1189.0 169.2" stroke="#1c1c1c" stroke-width="1" opacity=".82"/><path d="M629.0 601.5L1189.0 1161.5M629.0 279.5L1189.0 839.5M839.2 80V118.2L1189.0 468.0M1168.5 77.0L1189.0 97.5" stroke="#0a0a0a" stroke-width="1.7"/></g><text x="865" y="581" font-family="Liberation Sans, sans-serif" font-size="8" fill="#222">4X3</text><rect x="633.2" y="81.2" width="549.6" height="548.6" fill="none" stroke="#d9a03c" stroke-width="2.4" stroke-dasharray="3 2.5" opacity=".85"/></svg>
<svg class="a" style="left:1213px;top:82px" width="549" height="549" viewBox="1213 82 549 549"><rect x="1213" y="82" width="549" height="549" fill="#fff"/><g fill="none"><path d="M1210.0 577.0L1767.0 1134.0M1210.0 556.6L1767.0 1113.6M1210.0 536.1L1767.0 1093.2M1210.0 515.7L1767.0 1072.7M1210.0 495.2L1767.0 1052.2M1210.0 474.8L1767.0 1031.8M1210.0 454.4L1767.0 1011.4M1210.0 433.9L1767.0 990.9M1210.0 413.5L1767.0 970.5M1210.0 393.0L1767.0 950.0M1210.0 372.5L1767.0 929.5M1210.0 352.1L1767.0 909.1M1210.0 250.8L1767.0 807.8M1210.0 226.1L1767.0 783.1M1210.0 201.4L1767.0 758.4M1210.0 176.7L1767.0 733.7M1210.0 152.0L1767.0 709.0M1277.5 82V194.8L1767.0 684.3M1301.1 82V193.7L1767.0 659.6M1324.7 82V192.6L1767.0 634.9M1348.3 82V191.5L1767.0 610.2M1371.9 82V190.4L1767.0 585.5M1395.5 82V189.3L1767.0 560.8M1419.1 82V188.2L1767.0 536.1M1466.2 82V135.3L1767.0 436.1M1489.4 82V133.6L1767.0 411.2M1512.6 82V131.9L1767.0 386.3M1535.8 82V130.2L1767.0 361.4M1559.0 82V128.5L1767.0 336.5M1582.2 82V126.8L1767.0 311.6M1605.4 82V125.1L1767.0 286.7M1628.6 82V123.4L1767.0 261.8M1651.8 82V121.7L1767.0 236.9M1675.0 82V120.0L1767.0 212.0M1698.2 82V118.3L1767.0 187.1M1721.4 82V116.6L1767.0 162.2" stroke="#cbccd2" stroke-width=".7"/><path d="M1210.0 597.5L1767.0 1154.5M1210.0 275.5L1767.0 832.5M1443.0 82V137.0L1767.0 461.0M1755.5 79.0L1767.0 90.5" stroke="#c2c3c9" stroke-width="1"/></g><text x="1469" y="604" font-family="Liberation Sans, sans-serif" font-size="8" fill="#d8d8d8">4X3</text><rect x="1213.75" y="82.75" width="547.5" height="547.5" fill="none" stroke="#e3a81e" stroke-width="1.5"/></svg>

<!-- divider -->
<div class="a" style="left:613px;top:641px;width:1164px;height:2px;background:#ececec;"></div>
<!-- vertical tabs -->
<div class="a" style="left:613px;top:695px;width:19px;height:49px;border:1px solid #bfc4c8;box-sizing:border-box;background:#f4f5f6;"></div>
<div class="a" style="left:613px;top:744px;width:19px;height:50px;border:1px solid #bfc4c8;box-sizing:border-box;background:#f4f5f6;"></div>
<div class="t" style="left:623px;top:672px;font-size:11px;transform:translate(-50%,-50%) rotate(-90deg);color:#111;">缺陷结果</div>
<div class="t" style="left:623px;top:720px;font-size:11px;transform:translate(-50%,-50%) rotate(-90deg);color:#111;">历史数据</div>
<div class="t" style="left:623px;top:769px;font-size:11px;transform:translate(-50%,-50%) rotate(-90deg);color:#111;">控制面板</div>
<!-- buttons -->
<div class="btn" style="left:641px;top:652px;width:55px;height:29px;"><span>存图</span></div>
<div class="btn" style="left:706px;top:652px;width:55px;height:29px;"><span>比较</span></div>
<div class="btn" style="left:771px;top:652px;width:55px;height:29px;"><span>打开</span></div>
<div class="btn" style="left:836px;top:652px;width:55px;height:29px;"><span>复制</span></div>
<div class="btn" style="left:901px;top:652px;width:55px;height:29px;"><span>定位</span></div>
<div class="cb" style="left:967px;top:666px;"><svg width="13" height="13" viewBox="0 0 13 13" fill="none" stroke="#fff" stroke-width="1.7"><path d="M2.5 6.5L5.3 9.3L10.5 3.5"/></svg></div>
<div class="t" style="left:986px;top:668px;font-size:11px;">按缺陷图</div>
<div class="t" style="left:1040px;top:666px;font-size:11.5px;color:#222;">Image</div>
<svg class="a" style="left:1082px;top:670px" width="8" height="5"><path d="M0 0H8L4 4.5Z" fill="#666"/></svg>
<div class="ul" style="left:1039px;top:681px;width:51px;background:#666;"></div>
<div class="a" style="left:1107px;top:666px;width:12px;height:12px;border:1px solid #666;border-radius:2px;box-sizing:border-box;background:#fff;"></div>
<div class="t" style="left:1125px;top:668px;font-size:11px;">图像增强</div>
<div class="btn" style="left:1179px;top:657px;width:42px;height:30px;box-shadow:0 1px 4px rgba(0,0,0,.7);"><div class="a" style="left:1px;top:1px;right:1px;bottom:1px;border:1px dotted #1e2c33;"></div><span style="font-size:19px;top:44%;">←</span></div>
<div class="btn" style="left:1230px;top:657px;width:43px;height:30px;"><span style="font-size:19px;top:44%;">→</span></div>
<div class="t" style="left:1311px;top:666px;font-size:12px;color:#222;">2/42</div>
<div class="ul" style="left:1281px;top:681px;width:38px;background:#666;"></div>
<div class="btn" style="left:1379px;top:657px;width:50px;height:30px;"><span style="font-size:14.5px;">GO</span></div>
<!-- info left -->
<div class="t" style="right:974px;top:713px;font-size:13px;color:#111;">当前任务：</div>
<div class="t" style="left:803px;top:713px;font-size:13.2px;color:#111;width:213px;overflow:hidden;padding-bottom:4px;">DB_Test_20250424-DB_Test_20250424</div>
<div class="t" style="right:974px;top:753px;font-size:13px;color:#111;">任务状态：</div>
<div class="t" style="left:803px;top:753px;font-size:13px;color:#111;">检测完成</div>
<div class="t" style="right:974px;top:792px;font-size:13px;color:#111;">已扫描/总：</div>
<div class="t" style="left:803px;top:792px;font-size:13.2px;color:#111;">7/7</div>
<div class="t" style="right:974px;top:832px;font-size:13px;color:#111;">扫描时长：</div>
<div class="t" style="left:803px;top:832px;font-size:13.2px;color:#111;">00:00:23</div>
<div class="t" style="right:974px;top:872px;font-size:13px;color:#111;">处理进度：</div>
<div class="t" style="left:803px;top:872px;font-size:13.2px;color:#111;">100%</div>
<div class="t" style="right:974px;top:911px;font-size:13px;color:#111;">已发现缺陷：</div>
<div class="t" style="left:803px;top:911px;font-size:13.2px;color:#111;">100</div>
<!-- table -->
<div class="a" style="left:1017px;top:701px;width:380px;height:244px;background:#fafafa;border-radius:3px;box-shadow:0 1px 3px rgba(0,0,0,.3);overflow:hidden;font-size:12.3px;letter-spacing:-.5px;color:#333;">
 <div class="row" style="top:0;height:35px;"></div>
 <div class="t" style="left:15px;top:14px;font-size:11.5px;letter-spacing:0;color:#666;">类型</div>
 <div class="t" style="left:222px;top:14px;font-size:11.5px;letter-spacing:0;color:#666;">数量</div>
 <div class="row" style="top:36px;height:30px;"></div>
 <div class="t" style="left:17px;top:45px;">CD</div><div class="t" style="left:224px;top:45px;">22</div>
 <div class="row" style="top:66px;height:31px;background:#dcdcdc;border-bottom:none;"></div>
 <div class="t" style="left:17px;top:76px;">EDGE</div><div class="t" style="left:224px;top:76px;">17</div>
 <div class="row" style="top:97px;height:31px;"></div>
 <div class="t" style="left:17px;top:107px;">HOLE</div><div class="t" style="left:224px;top:107px;">22</div>
 <div class="row" style="top:129px;height:30px;"></div>
 <div class="t" style="left:17px;top:138px;">ISLAND</div><div class="t" style="left:224px;top:138px;">3</div>
 <div class="row" style="top:160px;height:30px;"></div>
 <div class="t" style="left:17px;top:169px;">MORE_DEFECT</div><div class="t" style="left:224px;top:169px;">36</div>
</div>
<!-- info right -->
<div class="t" style="right:256px;letter-spacing:.3px;top:713px;font-size:12.5px;color:#111;">GDS坐标（nm）：</div>
<div class="t" style="left:1530px;top:713px;font-size:12.5px;color:#111;">(-9553290.0000,7742290.0000)</div>
<div class="t" style="right:256px;letter-spacing:.3px;top:741px;font-size:12.5px;color:#111;">平台坐标（mm）：</div>
<div class="t" style="left:1530px;top:741px;font-size:12.5px;color:#111;">(8.3347,55.7773)</div>
<div class="t" style="right:256px;letter-spacing:.3px;top:769px;font-size:12.5px;color:#111;">缺陷大小（mm）：</div>
<div class="t" style="left:1530px;top:769px;font-size:12.5px;color:#111;">1302.20*1300.30</div>
<div class="t" style="right:256px;letter-spacing:.3px;top:797px;font-size:12.5px;color:#111;">像素大小（px）：</div>
<div class="t" style="left:1530px;top:797px;font-size:12.5px;color:#111;">4126990</div>
<div class="t" style="right:254px;top:826px;font-size:12.5px;color:#111;">缺陷类型：</div>
<div class="t" style="left:1530px;top:826px;font-size:12.5px;color:#111;">CD</div>
<!-- watermark -->
<div class="t" style="left:1513px;top:879px;font-size:19.4px;color:#b4b4b4;">激活 Windows</div>
<div class="t" style="left:1513px;top:905px;font-size:13.9px;color:#b4b4b4;">转到"设置"以激活 Windows。</div>
<!-- classify -->
<div class="t" style="left:1253px;top:956px;font-size:11.5px;color:#222;">分类:</div>
<div class="t" style="left:1283px;top:956px;font-size:11.5px;color:#222;">Default</div>
<svg class="a" style="left:1385px;top:959px" width="8" height="5"><path d="M0 0H8L4 4.5Z" fill="#666"/></svg>
<div class="ul" style="left:1282px;top:972px;width:112px;background:#777;"></div>
<!-- bottom bar -->
<div class="a" style="left:613px;top:977px;width:1164px;height:4px;background:#607d8b;"></div>
<!-- right floaters -->
<div class="a" style="left:1758px;top:780px;width:30px;height:30px;border-radius:50%;background:#4a8af4;box-shadow:0 0 3px rgba(0,0,0,.3);"></div>
<svg class="a" style="left:1766px;top:789px" width="8" height="12" fill="none" stroke="#fff" stroke-width="1.6"><path d="M6 1L1.5 6L6 11"/></svg>
<div class="a" style="left:1755px;top:872px;width:22px;height:95px;background:#1c1c1c;"></div>
<div class="a" style="left:1755px;top:903px;width:22px;height:1px;background:#444;"></div>
<div class="a" style="left:1755px;top:935px;width:22px;height:1px;background:#444;"></div>
<svg class="a" style="left:1761px;top:882px" width="14" height="12"><path d="M1 2H5L6 3.5H13V11H1Z" fill="#d81e3c"/></svg>
<svg class="a" style="left:1761px;top:912px" width="14" height="13"><path d="M1 1L12 6L9 7.5L12 12L1 9Z" fill="#d81e3c"/></svg>
<svg class="a" style="left:1761px;top:943px" width="14" height="13"><path d="M1 1L12 6L9 7.5L12 12L1 9Z" fill="#d81e3c"/></svg>

</body>
</html>
